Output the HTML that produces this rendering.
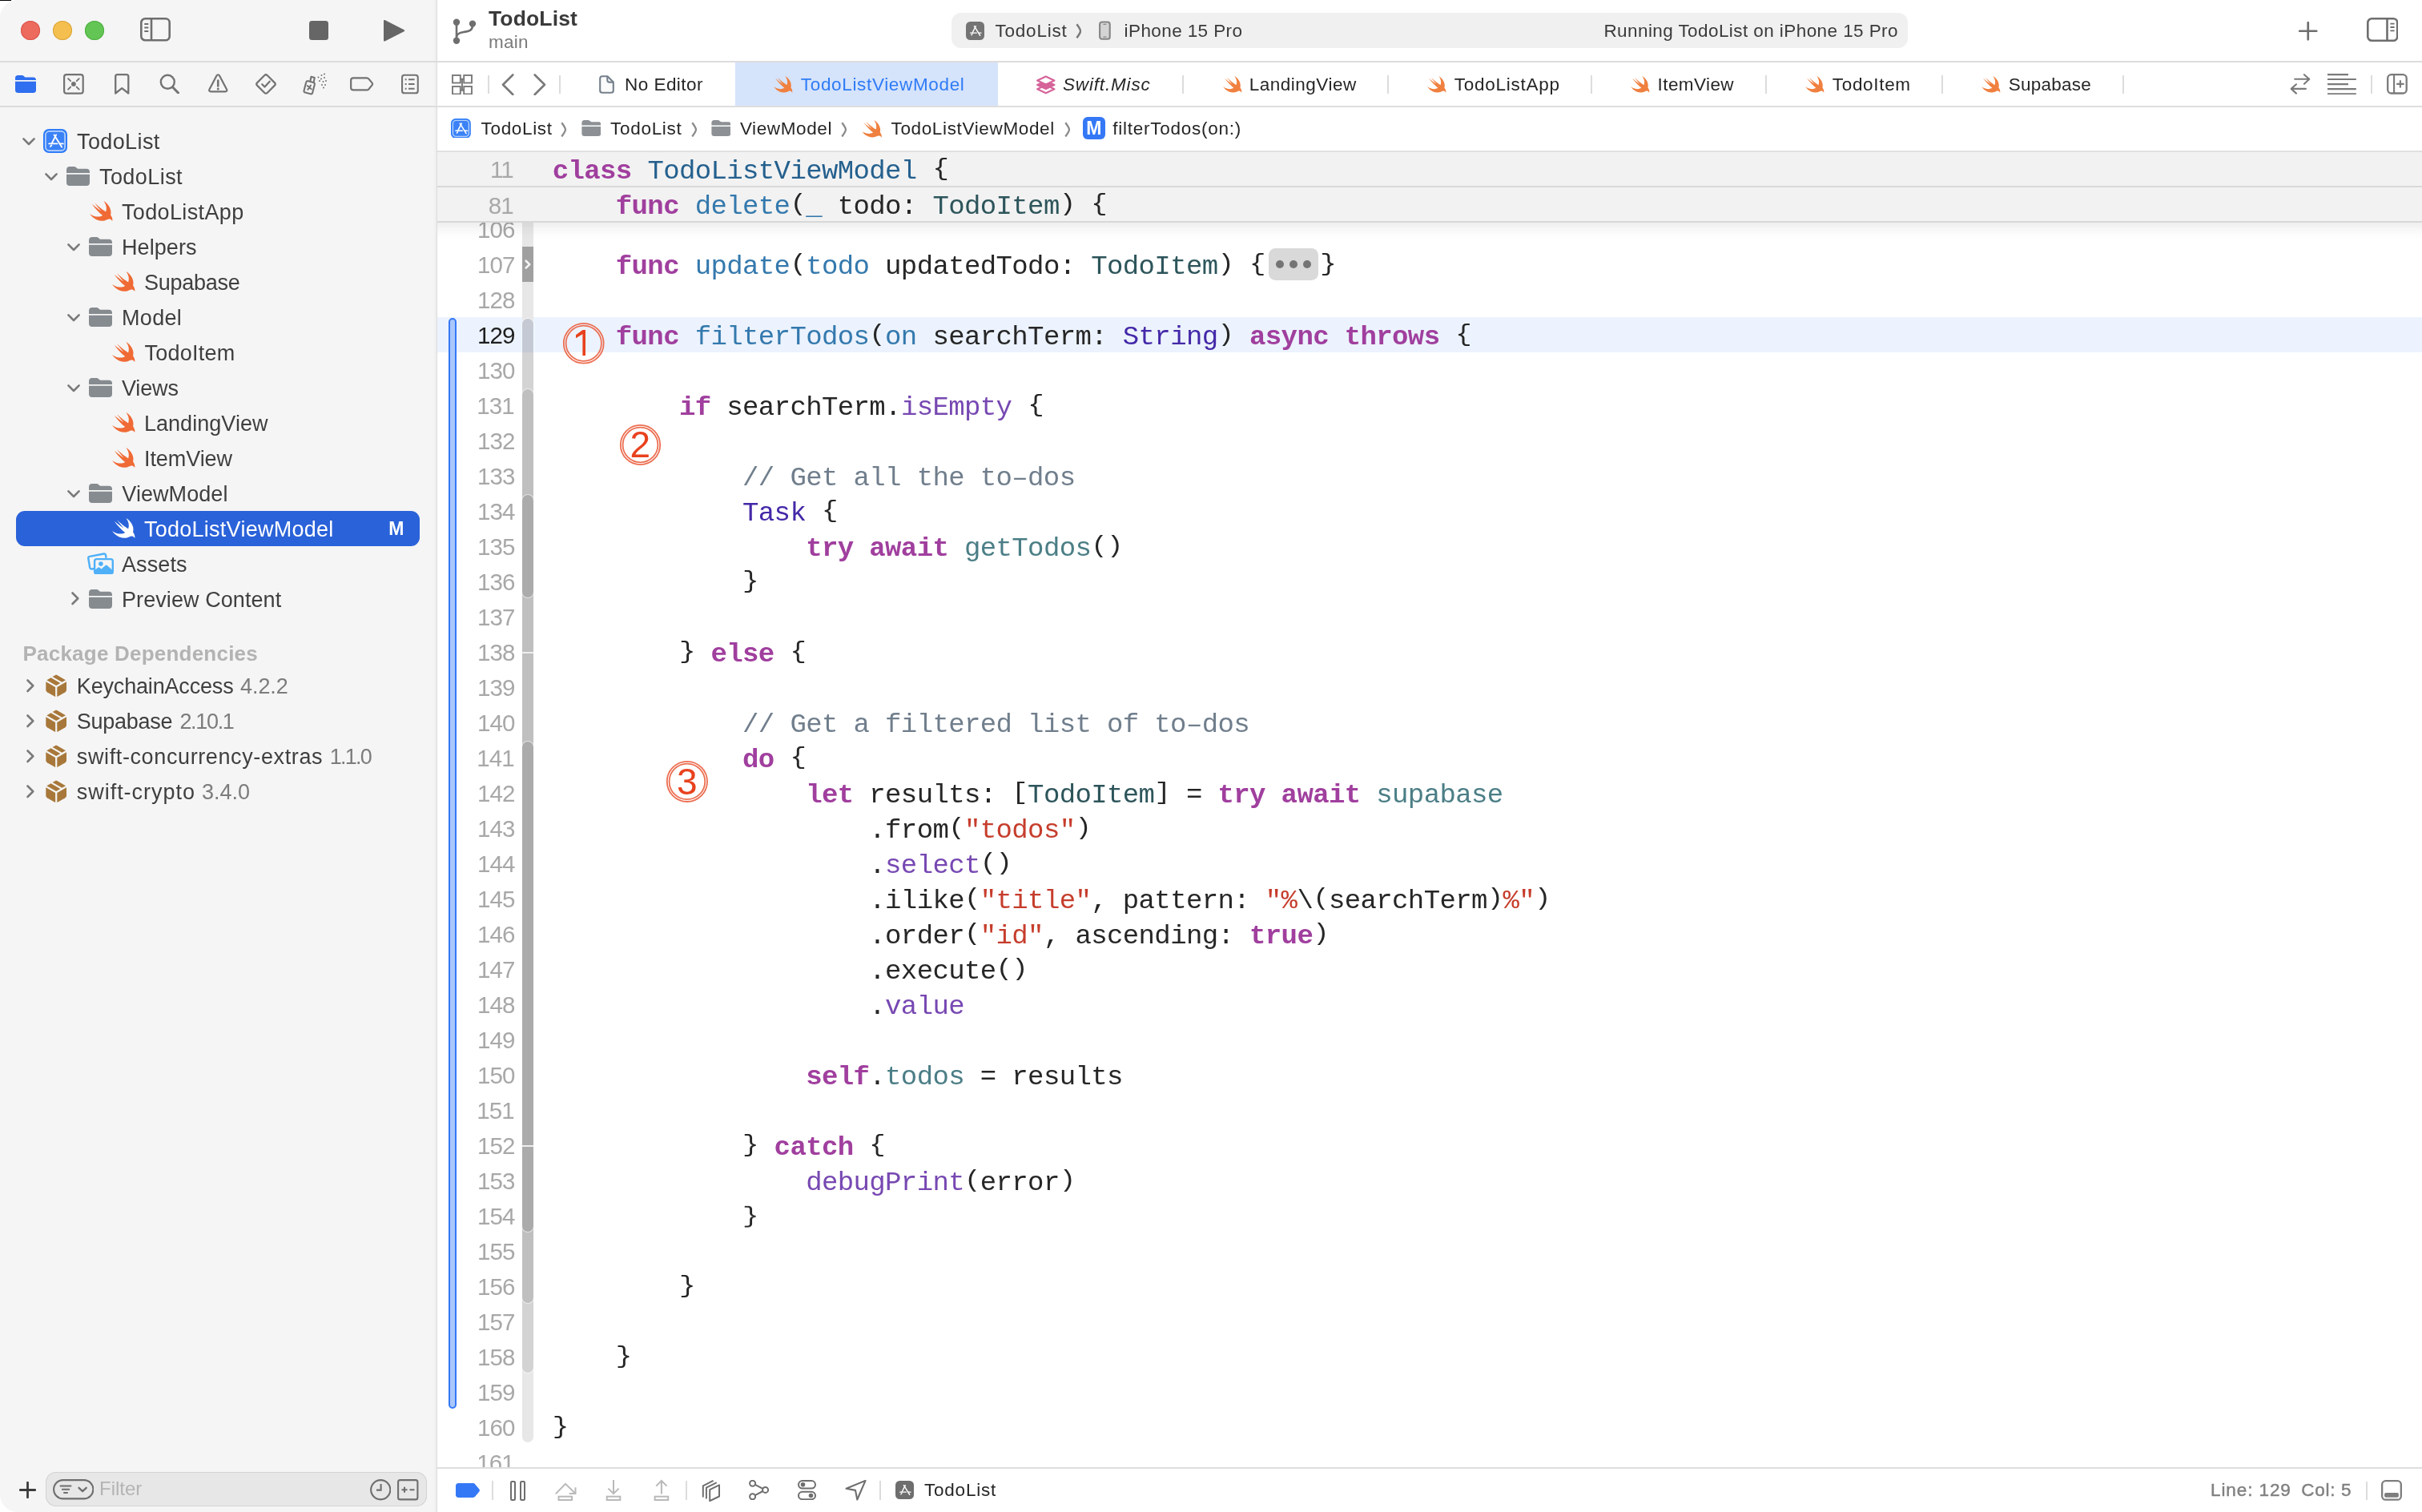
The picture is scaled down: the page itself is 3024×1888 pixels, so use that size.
<!DOCTYPE html>
<html><head><meta charset="utf-8"><title>Xcode - TodoList</title>
<style>html{font-size:calc(100vw / 30.24);}html,body{margin:0;padding:0;}body{width:30.24rem;height:18.88rem;position:relative;overflow:hidden;background:#ffffff;font-family:'Liberation Sans', sans-serif;}.c{position:absolute;white-space:pre;font-family:'Liberation Mono', monospace;}.b{display:inline-block;transform:translateY(-0.023rem) scaleY(0.86);}.k{color:#a03f9e;font-weight:bold}.td{color:#24608e}.fd{color:#3479ad}.pt{color:#2d555b}.st{color:#4428a8}.pf{color:#4b7e86}.sf{color:#7748b2}.s{color:#c63d2c}.cm{color:#707e8c}</style></head><body><div id="w" style="position:absolute;left:0;top:0;width:30.24rem;height:18.88rem;overflow:hidden;will-change:transform;transform:translateZ(0);">
<div style="position:absolute;left:0rem;top:0rem;width:5.45rem;height:18.88rem;background:#f5f5f5;"></div>
<div style="position:absolute;left:5.45rem;top:0rem;width:0.01rem;height:18.88rem;background:#dddddd;"></div>
<div style="position:absolute;left:5.41rem;top:0rem;width:0.04rem;height:18.88rem;background:linear-gradient(to right,rgba(0,0,0,0),rgba(0,0,0,0.035));"></div>
<div style="position:absolute;left:0rem;top:0.76rem;width:30.24rem;height:0.02rem;background:#dcdcdc;"></div>
<div style="position:absolute;left:0rem;top:1.32rem;width:5.45rem;height:0.02rem;background:#dcdcdc;"></div>
<div style="position:absolute;left:5.46rem;top:1.32rem;width:24.78rem;height:0.02rem;background:#dedede;"></div>
<div style="position:absolute;left:5.46rem;top:1.88rem;width:24.78rem;height:0.02rem;background:#e0e0e0;"></div>
<svg style="position:absolute;left:0rem;top:0rem;" width="0.22rem" height="0.22rem" viewBox="0 0 22 22"><path d="M0 0h22C9.800 0 0 9.800 0 22z" fill="#ffffff"/></svg>
<svg style="position:absolute;left:0rem;top:18.66rem;" width="0.22rem" height="0.22rem" viewBox="0 0 22 22"><path d="M0 22h22C9.800 22 0 12.200 0 0z" fill="#ffffff"/></svg>
<div style="position:absolute;left:0rem;top:0rem;width:0.14rem;height:0.01rem;background:#000000;"></div>
<div style="position:absolute;left:0.26rem;top:0.26rem;width:0.24rem;height:0.24rem;border-radius:50%;background:#ed6a5e;box-shadow:inset 0 0 0 0.01rem #d9554a;"></div>
<div style="position:absolute;left:0.66rem;top:0.26rem;width:0.24rem;height:0.24rem;border-radius:50%;background:#f5bf4f;box-shadow:inset 0 0 0 0.01rem #d9a43a;"></div>
<div style="position:absolute;left:1.06rem;top:0.26rem;width:0.24rem;height:0.24rem;border-radius:50%;background:#62c554;box-shadow:inset 0 0 0 0.01rem #4fae42;"></div>
<svg style="position:absolute;left:1.75rem;top:0.22rem;" width="0.38rem" height="0.295rem" viewBox="0 0 38 29.5"><rect x="1.3" y="1.3" width="35.4" height="26.9" rx="5" fill="none" stroke="#6e6e6e" stroke-width="2.6"/><path d="M14 1.500v26.500" stroke="#6e6e6e" stroke-width="2.600"/><path d="M5.300 8h5M5.300 12.500h5M5.300 17h5" stroke="#6e6e6e" stroke-width="1.800"/></svg>
<div style="position:absolute;left:3.86rem;top:0.26rem;width:0.24rem;height:0.24rem;background:#666666;border-radius:0.035rem;"></div>
<svg style="position:absolute;left:4.79rem;top:0.235rem;" width="0.27rem" height="0.285rem" viewBox="0 0 27 28.500"><path d="M2 1.200C.9.600 0 1.100 0 2.300v23.900c0 1.200.9 1.700 2 1.100L25.500 15.300c1-.6 1-1.500 0-2.100z" fill="#666"/></svg>
<svg style="position:absolute;left:0.19rem;top:0.939rem;" width="0.26rem" height="0.22rem" viewBox="0 0 26 22"><path fill="#2f6ff0" d="M0 3.600C0 1.300 1.200 0 3.500 0h4.600c1.100 0 1.800.300 2.600 1l1 .900c.500.400.900.600 1.700.600h9.100C24.800 2.500 26 3.700 26 6H0z"/><path fill="#2f6ff0" d="M0 7.800h26v10.700c0 2.300-1.200 3.500-3.500 3.500h-19C1.200 22 0 20.800 0 18.500z"/></svg>
<svg style="position:absolute;left:0.792rem;top:0.919rem;" width="0.258rem" height="0.258rem" viewBox="0 0 25.800 25.800"><rect x="1.100" y="1.100" width="23.600" height="23.600" rx="3" fill="none" stroke="#737373" stroke-width="2.200"/><path d="M6.100 6.200l3 3M19.700 6.200l-3 3M6.100 19.600l3-3M19.700 19.600l-3-3" stroke="#737373" stroke-width="1.900" stroke-linecap="round"/><circle cx="12.900" cy="12.900" r="2.900" fill="#737373"/></svg>
<svg style="position:absolute;left:1.43rem;top:0.919rem;" width="0.185rem" height="0.262rem" viewBox="0 0 18.500 26.200"><path d="M1.200 3.600c0-1.500.900-2.400 2.400-2.400h11.300c1.500 0 2.400.900 2.400 2.400v20.900L9.250 18.200 1.200 24.500z" fill="none" stroke="#737373" stroke-width="2.300" stroke-linejoin="round"/></svg>
<svg style="position:absolute;left:1.987rem;top:0.917rem;" width="0.25rem" height="0.255rem" viewBox="0 0 25 25.500"><circle cx="10.300" cy="10.300" r="8.500" fill="none" stroke="#737373" stroke-width="2.400"/><path d="M16.800 17l6.700 7" stroke="#737373" stroke-width="3" stroke-linecap="round"/></svg>
<svg style="position:absolute;left:2.6rem;top:0.918rem;" width="0.245rem" height="0.25rem" viewBox="0 0 24.500 25"><path d="M10.600 2.300c.800-1.400 2.500-1.400 3.300 0l9.100 17.300c.800 1.400 0 2.800-1.600 2.800H3.100c-1.600 0-2.400-1.400-1.600-2.800z" fill="none" stroke="#737373" stroke-width="2.200" stroke-linejoin="round"/><path d="M12.250 8.600v6.800" stroke="#737373" stroke-width="2.600" stroke-linecap="round"/><circle cx="12.250" cy="19" r="1.500" fill="#737373"/></svg>
<svg style="position:absolute;left:3.19rem;top:0.919rem;" width="0.26rem" height="0.26rem" viewBox="0 0 27 27"><path d="M11.800 2.100c1-1 2.400-1 3.400 0l9.700 9.700c1 1 1 2.400 0 3.400l-9.700 9.700c-1 1-2.400 1-3.400 0L2.100 15.200c-1-1-1-2.400 0-3.400z" fill="none" stroke="#737373" stroke-width="2.300"/><path d="M8.600 13.800l3.300 3.300 6.500-7" fill="none" stroke="#737373" stroke-width="2.400" stroke-linecap="round" stroke-linejoin="round"/></svg>
<svg style="position:absolute;left:3.775rem;top:0.91rem;" width="0.31rem" height="0.28rem" viewBox="0 0 31 28"><g fill="none" stroke="#737373" stroke-width="2.100" stroke-linejoin="round"><path d="M4.200 11.800c.3-1.300 1.300-1.900 2.600-1.600l6.400 1.700c1.300.3 1.900 1.300 1.600 2.600l-2.600 10.200c-.3 1.300-1.300 1.900-2.600 1.600l-6.400-1.700c-1.300-.3-1.900-1.300-1.600-2.600z"/><path d="M9.300 10.800l1.200-6 4.300 1.100-1.200 6"/><path d="M5.700 16l5 4.300M10 15.600l-3.700 5.300" stroke-width="1.900" stroke-linecap="round"/></g><g fill="#737373"><circle cx="19.500" cy="5.500" r="1"/><circle cx="23.500" cy="3" r="1"/><circle cx="27" cy="1.500" r="1"/><circle cx="23" cy="7.500" r="1"/><circle cx="27" cy="6" r="1"/><circle cx="21" cy="10" r="1"/><circle cx="25.500" cy="11" r="1"/><circle cx="29" cy="10" r="1"/><circle cx="24" cy="15" r="1"/><circle cx="28" cy="15" r="1"/><circle cx="26" cy="18.500" r="1"/></g></svg>
<svg style="position:absolute;left:4.37rem;top:0.961rem;" width="0.295rem" height="0.178rem" viewBox="0 0 30.500 18"><path d="M1.200 4.200c0-2 1-3 3-3h17.300c1.300 0 2 .3 2.800 1.300l4.300 5.200c.6.800.6 1.800 0 2.600l-4.300 5.200c-.8 1-1.500 1.300-2.800 1.300H4.200c-2 0-3-1-3-3z" fill="none" stroke="#737373" stroke-width="2.300"/></svg>
<svg style="position:absolute;left:5.01rem;top:0.919rem;" width="0.218rem" height="0.259rem" viewBox="0 0 23 26"><rect x="1.100" y="1.100" width="20.800" height="23.800" rx="3" fill="none" stroke="#737373" stroke-width="2.200"/><path d="M9.500 7h8M9.500 13h8M9.500 19h8" stroke="#737373" stroke-width="2.100"/><path d="M5 7h2M5 13h2M5 19h2" stroke="#737373" stroke-width="2.100"/></svg>
<svg style="position:absolute;left:0.28rem;top:1.715rem;overflow:visible;" width="0.16rem" height="0.095rem" viewBox="0 0 16 9.5"><path d="M1.4 1.4L8 8l6.6-6.6" fill="none" stroke="#7a7a7a" stroke-width="2.6" stroke-linecap="round" stroke-linejoin="round"/></svg>
<svg style="position:absolute;left:0.54rem;top:1.609rem;" width="0.3rem" height="0.3rem" viewBox="0 0 30 30"><rect x="0" y="0" width="30" height="30" rx="7" fill="#2f7cf8"/><rect x="2.900" y="2.900" width="24.200" height="24.200" rx="4.600" fill="#3b82f7" stroke="#b5d2fb" stroke-width="1.700"/><g stroke="#fff" stroke-width="1.850" stroke-linecap="round" fill="none" transform="translate(0.800,0.200)"><path d="M15.300 7.200L9.900 17.800"/><path d="M12.800 7.200l9.500 15.200"/><path d="M6.400 18.200h10.200"/><path d="M19.700 18.200h4.300"/><path d="M8.200 21.700l1.300-1.500"/></g></svg>
<div style="position:absolute;left:0.96rem;top:1.5604rem;height:0.43rem;line-height:0.43rem;font-family:'Liberation Sans', sans-serif;font-size:0.27rem;color:#3f3f3f;white-space:pre;letter-spacing:0.00392rem;">TodoList</div>
<svg style="position:absolute;left:0.56rem;top:2.155rem;overflow:visible;" width="0.16rem" height="0.095rem" viewBox="0 0 16 9.5"><path d="M1.4 1.4L8 8l6.6-6.6" fill="none" stroke="#7a7a7a" stroke-width="2.6" stroke-linecap="round" stroke-linejoin="round"/></svg>
<svg style="position:absolute;left:0.83rem;top:2.08rem;" width="0.29rem" height="0.24rem" viewBox="0 0 29 24"><path fill="#868b90" d="M0 4.2C0 1.6 1.4 0 4 0h5.2c1.3 0 2 .3 3 1.2l1.2 1c.5.4.9.6 1.8.6H25c2.6 0 4 1.4 4 3.9V7.900H0z"/><path fill="#868b90" d="M0 9.700h29v10.400c0 2.5-1.4 3.9-4 3.9H4c-2.6 0-4-1.4-4-3.9z"/></svg>
<div style="position:absolute;left:1.24rem;top:2.0004rem;height:0.43rem;line-height:0.43rem;font-family:'Liberation Sans', sans-serif;font-size:0.27rem;color:#3f3f3f;white-space:pre;letter-spacing:0.00429rem;">TodoList</div>
<svg style="position:absolute;left:1.115rem;top:2.51rem;overflow:visible;" preserveAspectRatio="none" width="0.286rem" height="0.254rem" viewBox="2.35 3.35 18.3 16.6"><path fill="#f06a35" d="M13.543 3.41c4.114 2.47 6.545 7.162 5.549 11.131-.024.093-.05.181-.076.272l.002.001c2.062 2.538 1.5 5.258 1.236 4.745-1.072-2.086-3.066-1.568-4.088-1.043a6.803 6.803 0 0 1-.281.158l-.02.012-.002.002c-2.115 1.123-4.957 1.205-7.812-.022a12.568 12.568 0 0 1-5.64-4.838c.649.48 1.35.902 2.097 1.252 3.019 1.414 6.051 1.311 8.197-.002C9.651 12.73 7.101 9.67 5.146 7.191a10.628 10.628 0 0 1-1.005-1.384c2.34 2.142 6.038 4.83 7.365 5.576C8.69 8.408 6.208 4.743 6.324 4.86c4.436 4.47 8.528 6.996 8.528 6.996.154.085.27.154.36.213.085-.215.16-.437.224-.668.708-2.588-.09-5.548-1.893-7.992z"/></svg>
<div style="position:absolute;left:1.52rem;top:2.4404rem;height:0.43rem;line-height:0.43rem;font-family:'Liberation Sans', sans-serif;font-size:0.27rem;color:#3f3f3f;white-space:pre;letter-spacing:0.00354rem;">TodoListApp</div>
<svg style="position:absolute;left:0.84rem;top:3.035rem;overflow:visible;" width="0.16rem" height="0.095rem" viewBox="0 0 16 9.5"><path d="M1.4 1.4L8 8l6.6-6.6" fill="none" stroke="#7a7a7a" stroke-width="2.6" stroke-linecap="round" stroke-linejoin="round"/></svg>
<svg style="position:absolute;left:1.11rem;top:2.96rem;" width="0.29rem" height="0.24rem" viewBox="0 0 29 24"><path fill="#868b90" d="M0 4.2C0 1.6 1.4 0 4 0h5.2c1.3 0 2 .3 3 1.2l1.2 1c.5.4.9.6 1.8.6H25c2.6 0 4 1.4 4 3.9V7.900H0z"/><path fill="#868b90" d="M0 9.700h29v10.400c0 2.5-1.4 3.9-4 3.9H4c-2.6 0-4-1.4-4-3.9z"/></svg>
<div style="position:absolute;left:1.52rem;top:2.8804rem;height:0.43rem;line-height:0.43rem;font-family:'Liberation Sans', sans-serif;font-size:0.27rem;color:#3f3f3f;white-space:pre;letter-spacing:0.0008rem;">Helpers</div>
<svg style="position:absolute;left:1.395rem;top:3.39rem;overflow:visible;" preserveAspectRatio="none" width="0.286rem" height="0.254rem" viewBox="2.35 3.35 18.3 16.6"><path fill="#f06a35" d="M13.543 3.41c4.114 2.47 6.545 7.162 5.549 11.131-.024.093-.05.181-.076.272l.002.001c2.062 2.538 1.5 5.258 1.236 4.745-1.072-2.086-3.066-1.568-4.088-1.043a6.803 6.803 0 0 1-.281.158l-.02.012-.002.002c-2.115 1.123-4.957 1.205-7.812-.022a12.568 12.568 0 0 1-5.64-4.838c.649.48 1.35.902 2.097 1.252 3.019 1.414 6.051 1.311 8.197-.002C9.651 12.73 7.101 9.67 5.146 7.191a10.628 10.628 0 0 1-1.005-1.384c2.34 2.142 6.038 4.83 7.365 5.576C8.69 8.408 6.208 4.743 6.324 4.86c4.436 4.47 8.528 6.996 8.528 6.996.154.085.27.154.36.213.085-.215.16-.437.224-.668.708-2.588-.09-5.548-1.893-7.992z"/></svg>
<div style="position:absolute;left:1.799rem;top:3.3204rem;height:0.43rem;line-height:0.43rem;font-family:'Liberation Sans', sans-serif;font-size:0.27rem;color:#3f3f3f;white-space:pre;letter-spacing:-0.00238rem;">Supabase</div>
<svg style="position:absolute;left:0.84rem;top:3.915rem;overflow:visible;" width="0.16rem" height="0.095rem" viewBox="0 0 16 9.5"><path d="M1.4 1.4L8 8l6.6-6.6" fill="none" stroke="#7a7a7a" stroke-width="2.6" stroke-linecap="round" stroke-linejoin="round"/></svg>
<svg style="position:absolute;left:1.11rem;top:3.84rem;" width="0.29rem" height="0.24rem" viewBox="0 0 29 24"><path fill="#868b90" d="M0 4.2C0 1.6 1.4 0 4 0h5.2c1.3 0 2 .3 3 1.2l1.2 1c.5.4.9.6 1.8.6H25c2.6 0 4 1.4 4 3.9V7.900H0z"/><path fill="#868b90" d="M0 9.700h29v10.400c0 2.5-1.4 3.9-4 3.9H4c-2.6 0-4-1.4-4-3.9z"/></svg>
<div style="position:absolute;left:1.52rem;top:3.7604rem;height:0.43rem;line-height:0.43rem;font-family:'Liberation Sans', sans-serif;font-size:0.27rem;color:#3f3f3f;white-space:pre;letter-spacing:0.00312rem;">Model</div>
<svg style="position:absolute;left:1.395rem;top:4.27rem;overflow:visible;" preserveAspectRatio="none" width="0.286rem" height="0.254rem" viewBox="2.35 3.35 18.3 16.6"><path fill="#f06a35" d="M13.543 3.41c4.114 2.47 6.545 7.162 5.549 11.131-.024.093-.05.181-.076.272l.002.001c2.062 2.538 1.5 5.258 1.236 4.745-1.072-2.086-3.066-1.568-4.088-1.043a6.803 6.803 0 0 1-.281.158l-.02.012-.002.002c-2.115 1.123-4.957 1.205-7.812-.022a12.568 12.568 0 0 1-5.64-4.838c.649.48 1.35.902 2.097 1.252 3.019 1.414 6.051 1.311 8.197-.002C9.651 12.73 7.101 9.67 5.146 7.191a10.628 10.628 0 0 1-1.005-1.384c2.34 2.142 6.038 4.83 7.365 5.576C8.69 8.408 6.208 4.743 6.324 4.86c4.436 4.47 8.528 6.996 8.528 6.996.154.085.27.154.36.213.085-.215.16-.437.224-.668.708-2.588-.09-5.548-1.893-7.992z"/></svg>
<div style="position:absolute;left:1.805rem;top:4.2004rem;height:0.43rem;line-height:0.43rem;font-family:'Liberation Sans', sans-serif;font-size:0.27rem;color:#3f3f3f;white-space:pre;letter-spacing:0.0023rem;">TodoItem</div>
<svg style="position:absolute;left:0.84rem;top:4.795rem;overflow:visible;" width="0.16rem" height="0.095rem" viewBox="0 0 16 9.5"><path d="M1.4 1.4L8 8l6.6-6.6" fill="none" stroke="#7a7a7a" stroke-width="2.6" stroke-linecap="round" stroke-linejoin="round"/></svg>
<svg style="position:absolute;left:1.11rem;top:4.72rem;" width="0.29rem" height="0.24rem" viewBox="0 0 29 24"><path fill="#868b90" d="M0 4.2C0 1.6 1.4 0 4 0h5.2c1.3 0 2 .3 3 1.2l1.2 1c.5.4.9.6 1.8.6H25c2.6 0 4 1.4 4 3.9V7.900H0z"/><path fill="#868b90" d="M0 9.700h29v10.400c0 2.5-1.4 3.9-4 3.9H4c-2.6 0-4-1.4-4-3.9z"/></svg>
<div style="position:absolute;left:1.52rem;top:4.6404rem;height:0.43rem;line-height:0.43rem;font-family:'Liberation Sans', sans-serif;font-size:0.27rem;color:#3f3f3f;white-space:pre;letter-spacing:-0.00147rem;">Views</div>
<svg style="position:absolute;left:1.395rem;top:5.15rem;overflow:visible;" preserveAspectRatio="none" width="0.286rem" height="0.254rem" viewBox="2.35 3.35 18.3 16.6"><path fill="#f06a35" d="M13.543 3.41c4.114 2.47 6.545 7.162 5.549 11.131-.024.093-.05.181-.076.272l.002.001c2.062 2.538 1.5 5.258 1.236 4.745-1.072-2.086-3.066-1.568-4.088-1.043a6.803 6.803 0 0 1-.281.158l-.02.012-.002.002c-2.115 1.123-4.957 1.205-7.812-.022a12.568 12.568 0 0 1-5.64-4.838c.649.48 1.35.902 2.097 1.252 3.019 1.414 6.051 1.311 8.197-.002C9.651 12.73 7.101 9.67 5.146 7.191a10.628 10.628 0 0 1-1.005-1.384c2.34 2.142 6.038 4.83 7.365 5.576C8.69 8.408 6.208 4.743 6.324 4.86c4.436 4.47 8.528 6.996 8.528 6.996.154.085.27.154.36.213.085-.215.16-.437.224-.668.708-2.588-.09-5.548-1.893-7.992z"/></svg>
<div style="position:absolute;left:1.799rem;top:5.0804rem;height:0.43rem;line-height:0.43rem;font-family:'Liberation Sans', sans-serif;font-size:0.27rem;color:#3f3f3f;white-space:pre;letter-spacing:0.00052rem;">LandingView</div>
<svg style="position:absolute;left:1.395rem;top:5.59rem;overflow:visible;" preserveAspectRatio="none" width="0.286rem" height="0.254rem" viewBox="2.35 3.35 18.3 16.6"><path fill="#f06a35" d="M13.543 3.41c4.114 2.47 6.545 7.162 5.549 11.131-.024.093-.05.181-.076.272l.002.001c2.062 2.538 1.5 5.258 1.236 4.745-1.072-2.086-3.066-1.568-4.088-1.043a6.803 6.803 0 0 1-.281.158l-.02.012-.002.002c-2.115 1.123-4.957 1.205-7.812-.022a12.568 12.568 0 0 1-5.64-4.838c.649.48 1.35.902 2.097 1.252 3.019 1.414 6.051 1.311 8.197-.002C9.651 12.73 7.101 9.67 5.146 7.191a10.628 10.628 0 0 1-1.005-1.384c2.34 2.142 6.038 4.83 7.365 5.576C8.69 8.408 6.208 4.743 6.324 4.86c4.436 4.47 8.528 6.996 8.528 6.996.154.085.27.154.36.213.085-.215.16-.437.224-.668.708-2.588-.09-5.548-1.893-7.992z"/></svg>
<div style="position:absolute;left:1.8rem;top:5.5204rem;height:0.43rem;line-height:0.43rem;font-family:'Liberation Sans', sans-serif;font-size:0.27rem;color:#3f3f3f;white-space:pre;letter-spacing:-0.00081rem;">ItemView</div>
<svg style="position:absolute;left:0.84rem;top:6.115rem;overflow:visible;" width="0.16rem" height="0.095rem" viewBox="0 0 16 9.5"><path d="M1.4 1.4L8 8l6.6-6.6" fill="none" stroke="#7a7a7a" stroke-width="2.6" stroke-linecap="round" stroke-linejoin="round"/></svg>
<svg style="position:absolute;left:1.11rem;top:6.04rem;" width="0.29rem" height="0.24rem" viewBox="0 0 29 24"><path fill="#868b90" d="M0 4.2C0 1.6 1.4 0 4 0h5.2c1.3 0 2 .3 3 1.2l1.2 1c.5.4.9.6 1.8.6H25c2.6 0 4 1.4 4 3.9V7.900H0z"/><path fill="#868b90" d="M0 9.700h29v10.400c0 2.5-1.4 3.9-4 3.9H4c-2.6 0-4-1.4-4-3.9z"/></svg>
<div style="position:absolute;left:1.523rem;top:5.9604rem;height:0.43rem;line-height:0.43rem;font-family:'Liberation Sans', sans-serif;font-size:0.27rem;color:#3f3f3f;white-space:pre;letter-spacing:0.0007rem;">ViewModel</div>
<div style="position:absolute;left:0.2rem;top:6.38rem;width:5.04rem;height:0.44rem;background:#2a62d9;border-radius:0.11rem;"></div>
<svg style="position:absolute;left:1.395rem;top:6.47rem;overflow:visible;" preserveAspectRatio="none" width="0.286rem" height="0.254rem" viewBox="2.35 3.35 18.3 16.6"><path fill="#ffffff" d="M13.543 3.41c4.114 2.47 6.545 7.162 5.549 11.131-.024.093-.05.181-.076.272l.002.001c2.062 2.538 1.5 5.258 1.236 4.745-1.072-2.086-3.066-1.568-4.088-1.043a6.803 6.803 0 0 1-.281.158l-.02.012-.002.002c-2.115 1.123-4.957 1.205-7.812-.022a12.568 12.568 0 0 1-5.64-4.838c.649.48 1.35.902 2.097 1.252 3.019 1.414 6.051 1.311 8.197-.002C9.651 12.73 7.101 9.67 5.146 7.191a10.628 10.628 0 0 1-1.005-1.384c2.34 2.142 6.038 4.83 7.365 5.576C8.69 8.408 6.208 4.743 6.324 4.86c4.436 4.47 8.528 6.996 8.528 6.996.154.085.27.154.36.213.085-.215.16-.437.224-.668.708-2.588-.09-5.548-1.893-7.992z"/></svg>
<div style="position:absolute;left:1.8rem;top:6.4004rem;height:0.43rem;line-height:0.43rem;font-family:'Liberation Sans', sans-serif;font-size:0.27rem;color:#ffffff;white-space:pre;letter-spacing:0.00257rem;">TodoListViewModel</div>
<div style="position:absolute;left:4.853rem;top:6.4183rem;height:0.37rem;line-height:0.37rem;font-family:'Liberation Sans', sans-serif;font-size:0.23rem;color:#ffffff;white-space:pre;font-weight:bold;">M</div>
<svg style="position:absolute;left:1.09rem;top:6.895rem;" width="0.332rem" height="0.278rem" viewBox="0 0 33.2 27.8"><g fill="none" stroke="#4fb0f8" stroke-width="2.4" stroke-linejoin="round"><path d="M9.2 19.9 5.6 20.5c-1.3.2-2.1-.4-2.4-1.7L1.3 7.3C1.1 6 1.7 5.1 3 4.9L20.600 1.5c1.3-.2 2.2.4 2.400 1.700l.6 3.6"/><rect x="9.1" y="8.1" width="22.7" height="18.300" rx="2.6"/></g><circle cx="16.9" cy="14.1" r="2.800" fill="#4fb0f8"/><path fill="#4fb0f8" d="M9.1 22.200l4-3.500c.8-.7 1.500-.7 2.300 0l2.100 1.900 4.900-4.400c.9-.8 1.700-.8 2.600 0l6.800 6.100v2c0 1.400-.8 2.100-2.200 2.100H11.300c-1.400 0-2.200-.7-2.200-2.100z"/></svg>
<div style="position:absolute;left:1.52rem;top:6.8404rem;height:0.43rem;line-height:0.43rem;font-family:'Liberation Sans', sans-serif;font-size:0.27rem;color:#3f3f3f;white-space:pre;letter-spacing:0.00112rem;">Assets</div>
<svg style="position:absolute;left:0.89rem;top:7.39rem;overflow:visible;" width="0.1rem" height="0.165rem" viewBox="0 0 10 16.5"><path d="M1.5 1.5l6.8 6.75L1.5 15" fill="none" stroke="#7a7a7a" stroke-width="2.6" stroke-linecap="round" stroke-linejoin="round"/></svg>
<svg style="position:absolute;left:1.11rem;top:7.36rem;" width="0.29rem" height="0.24rem" viewBox="0 0 29 24"><path fill="#868b90" d="M0 4.2C0 1.6 1.4 0 4 0h5.2c1.3 0 2 .3 3 1.2l1.2 1c.5.4.9.6 1.8.6H25c2.6 0 4 1.4 4 3.9V7.900H0z"/><path fill="#868b90" d="M0 9.700h29v10.400c0 2.5-1.4 3.9-4 3.9H4c-2.6 0-4-1.4-4-3.9z"/></svg>
<div style="position:absolute;left:1.52rem;top:7.2804rem;height:0.43rem;line-height:0.43rem;font-family:'Liberation Sans', sans-serif;font-size:0.27rem;color:#3f3f3f;white-space:pre;letter-spacing:0.0008rem;">Preview Content</div>
<div style="position:absolute;left:0.285rem;top:7.9479rem;height:0.42rem;line-height:0.42rem;font-family:'Liberation Sans', sans-serif;font-size:0.26rem;color:#b3b3b3;white-space:pre;font-weight:bold;letter-spacing:0.0022rem;">Package Dependencies</div>
<svg style="position:absolute;left:0.33rem;top:8.475rem;overflow:visible;" width="0.1rem" height="0.165rem" viewBox="0 0 10 16.5"><path d="M1.5 1.5l6.8 6.75L1.5 15" fill="none" stroke="#7a7a7a" stroke-width="2.6" stroke-linecap="round" stroke-linejoin="round"/></svg>
<svg style="position:absolute;left:0.568rem;top:8.418rem;" width="0.264rem" height="0.282rem" viewBox="0 0 26.4 28.2"><g fill="#a8783a"><path d="M8.6 3.1 11.7 1.3c1-.6 2-.6 3 0L25 7.2l-4.6 2.6z"/><path d="M1.3 7.3 6.6 4.2 18.4 11l-4.2 2.4c-.7.4-1.3.4-2 0z"/><path d="M.3 9.3l11.8 6.8v12L2.2 22.4C.9 21.6.3 20.7.3 19.2z"/><path d="M26.1 9.3 14.3 16.1v12l9.9-5.7c1.3-.8 1.9-1.7 1.9-3.2z"/></g></svg>
<div style="position:absolute;left:0.958rem;top:8.3584rem;height:0.43rem;line-height:0.43rem;font-family:'Liberation Sans', sans-serif;font-size:0.27rem;color:#3f3f3f;white-space:pre;letter-spacing:-0.00171rem;">KeychainAccess</div>
<div style="position:absolute;left:3rem;top:8.3584rem;height:0.43rem;line-height:0.43rem;font-family:'Liberation Sans', sans-serif;font-size:0.27rem;color:#7c7c7c;white-space:pre;letter-spacing:-0.0007rem;">4.2.2</div>
<svg style="position:absolute;left:0.33rem;top:8.915rem;overflow:visible;" width="0.1rem" height="0.165rem" viewBox="0 0 10 16.5"><path d="M1.5 1.5l6.8 6.75L1.5 15" fill="none" stroke="#7a7a7a" stroke-width="2.6" stroke-linecap="round" stroke-linejoin="round"/></svg>
<svg style="position:absolute;left:0.568rem;top:8.858rem;" width="0.264rem" height="0.282rem" viewBox="0 0 26.4 28.2"><g fill="#a8783a"><path d="M8.6 3.1 11.7 1.3c1-.6 2-.6 3 0L25 7.2l-4.6 2.6z"/><path d="M1.3 7.3 6.6 4.2 18.4 11l-4.2 2.4c-.7.4-1.3.4-2 0z"/><path d="M.3 9.3l11.8 6.8v12L2.2 22.4C.9 21.6.3 20.7.3 19.2z"/><path d="M26.1 9.3 14.3 16.1v12l9.9-5.7c1.3-.8 1.9-1.7 1.9-3.2z"/></g></svg>
<div style="position:absolute;left:0.958rem;top:8.7984rem;height:0.43rem;line-height:0.43rem;font-family:'Liberation Sans', sans-serif;font-size:0.27rem;color:#3f3f3f;white-space:pre;letter-spacing:-0.00263rem;">Supabase</div>
<div style="position:absolute;left:2.244rem;top:8.7984rem;height:0.43rem;line-height:0.43rem;font-family:'Liberation Sans', sans-serif;font-size:0.27rem;color:#7c7c7c;white-space:pre;letter-spacing:-0.01328rem;">2.10.1</div>
<svg style="position:absolute;left:0.33rem;top:9.355rem;overflow:visible;" width="0.1rem" height="0.165rem" viewBox="0 0 10 16.5"><path d="M1.5 1.5l6.8 6.75L1.5 15" fill="none" stroke="#7a7a7a" stroke-width="2.6" stroke-linecap="round" stroke-linejoin="round"/></svg>
<svg style="position:absolute;left:0.568rem;top:9.298rem;" width="0.264rem" height="0.282rem" viewBox="0 0 26.4 28.2"><g fill="#a8783a"><path d="M8.6 3.1 11.7 1.3c1-.6 2-.6 3 0L25 7.2l-4.6 2.6z"/><path d="M1.3 7.3 6.6 4.2 18.4 11l-4.2 2.4c-.7.4-1.3.4-2 0z"/><path d="M.3 9.3l11.8 6.8v12L2.2 22.4C.9 21.6.3 20.7.3 19.2z"/><path d="M26.1 9.3 14.3 16.1v12l9.9-5.7c1.3-.8 1.9-1.7 1.9-3.2z"/></g></svg>
<div style="position:absolute;left:0.958rem;top:9.2384rem;height:0.43rem;line-height:0.43rem;font-family:'Liberation Sans', sans-serif;font-size:0.27rem;color:#3f3f3f;white-space:pre;letter-spacing:0.00618rem;">swift-concurrency-extras</div>
<div style="position:absolute;left:4.117rem;top:9.2384rem;height:0.43rem;line-height:0.43rem;font-family:'Liberation Sans', sans-serif;font-size:0.27rem;color:#7c7c7c;white-space:pre;letter-spacing:-0.0177rem;">1.1.0</div>
<svg style="position:absolute;left:0.33rem;top:9.795rem;overflow:visible;" width="0.1rem" height="0.165rem" viewBox="0 0 10 16.5"><path d="M1.5 1.5l6.8 6.75L1.5 15" fill="none" stroke="#7a7a7a" stroke-width="2.6" stroke-linecap="round" stroke-linejoin="round"/></svg>
<svg style="position:absolute;left:0.568rem;top:9.738rem;" width="0.264rem" height="0.282rem" viewBox="0 0 26.4 28.2"><g fill="#a8783a"><path d="M8.6 3.1 11.7 1.3c1-.6 2-.6 3 0L25 7.2l-4.6 2.6z"/><path d="M1.3 7.3 6.6 4.2 18.4 11l-4.2 2.4c-.7.4-1.3.4-2 0z"/><path d="M.3 9.3l11.8 6.8v12L2.2 22.4C.9 21.6.3 20.7.3 19.2z"/><path d="M26.1 9.3 14.3 16.1v12l9.9-5.7c1.3-.8 1.9-1.7 1.9-3.2z"/></g></svg>
<div style="position:absolute;left:0.958rem;top:9.6784rem;height:0.43rem;line-height:0.43rem;font-family:'Liberation Sans', sans-serif;font-size:0.27rem;color:#3f3f3f;white-space:pre;letter-spacing:0.00965rem;">swift-crypto</div>
<div style="position:absolute;left:2.52rem;top:9.6784rem;height:0.43rem;line-height:0.43rem;font-family:'Liberation Sans', sans-serif;font-size:0.27rem;color:#7c7c7c;white-space:pre;letter-spacing:0.0001rem;">3.4.0</div>
<svg style="position:absolute;left:0.24rem;top:18.5rem;" width="0.21rem" height="0.21rem" viewBox="0 0 21 21"><path d="M10.500 1.200v18.600M1.200 10.500h18.600" stroke="#3c3c3c" stroke-width="2.800" stroke-linecap="round"/></svg>
<div style="position:absolute;left:0.565rem;top:18.38rem;width:4.765rem;height:0.43rem;background:#e7e7e7;border-radius:0.13rem;box-shadow:inset 0 0 0 0.01rem #d3d3d3;box-sizing:border-box;"></div>
<svg style="position:absolute;left:0.655rem;top:18.47rem;" width="0.515rem" height="0.255rem" viewBox="0 0 51.500 25.500"><rect x="1.100" y="1.100" width="49.300" height="23.300" rx="11.650" fill="none" stroke="#6e6e6e" stroke-width="2.100"/><path d="M9.500 8.500h13M11.800 12.750h8.400M14 17h4" stroke="#6e6e6e" stroke-width="2" stroke-linecap="round"/><path d="M32.500 10.800l4.600 4.400 4.600-4.400" fill="none" stroke="#6e6e6e" stroke-width="2.300" stroke-linecap="round" stroke-linejoin="round"/></svg>
<div style="position:absolute;left:1.24rem;top:18.4028rem;height:0.38rem;line-height:0.38rem;font-family:'Liberation Sans', sans-serif;font-size:0.24rem;color:#b4b4b4;white-space:pre;">Filter</div>
<svg style="position:absolute;left:4.615rem;top:18.47rem;" width="0.265rem" height="0.265rem" viewBox="0 0 26.500 26.500"><circle cx="13.250" cy="13.250" r="12.100" fill="none" stroke="#6e6e6e" stroke-width="2.100"/><path d="M13.600 6v7.600H8" fill="none" stroke="#6e6e6e" stroke-width="2.100"/></svg>
<svg style="position:absolute;left:4.96rem;top:18.47rem;" width="0.265rem" height="0.265rem" viewBox="0 0 26.500 26.500"><rect x="1.100" y="1.100" width="24.300" height="24.300" rx="2.500" fill="none" stroke="#6e6e6e" stroke-width="2.100"/><path d="M5.500 13.250h7M9 9.750v7M15.500 13.250h6" stroke="#6e6e6e" stroke-width="2.100"/></svg>
<svg style="position:absolute;left:5.65rem;top:0.225rem;" width="0.3rem" height="0.325rem" viewBox="0 0 30 32.500"><g fill="none" stroke="#6e6e6e" stroke-width="2.600"><path d="M5 7v18.500"/><path d="M25 8.500c0 7-5 7.500-11 8.500-5 .8-9 2-9 6"/></g><circle cx="5" cy="4.800" r="4.200" fill="#6e6e6e"/><circle cx="25" cy="6.600" r="4.200" fill="#6e6e6e"/><circle cx="5" cy="27.700" r="4.200" fill="#6e6e6e"/></svg>
<div style="position:absolute;left:6.1rem;top:0.0182rem;height:0.42rem;line-height:0.42rem;font-family:'Liberation Sans', sans-serif;font-size:0.265rem;color:#3a3a3a;white-space:pre;font-weight:bold;letter-spacing:0.00138rem;">TodoList</div>
<div style="position:absolute;left:6.1rem;top:0.345rem;height:0.36rem;line-height:0.36rem;font-family:'Liberation Sans', sans-serif;font-size:0.225rem;color:#7b7b7b;white-space:pre;letter-spacing:0.00258rem;">main</div>
<div style="position:absolute;left:11.88rem;top:0.16rem;width:11.94rem;height:0.44rem;background:#f0f0f0;border-radius:0.12rem;"></div>
<svg style="position:absolute;left:12.06rem;top:0.268rem;" width="0.23rem" height="0.23rem" viewBox="0 0 30 30"><rect x="0" y="0" width="30" height="30" rx="7" fill="#747474"/><g stroke="#fff" stroke-width="1.850" stroke-linecap="round" fill="none" transform="translate(0.800,0.200)"><path d="M15.300 7.200L9.900 17.800"/><path d="M12.800 7.200l9.500 15.200"/><path d="M6.400 18.200h10.200"/><path d="M19.700 18.200h4.300"/><path d="M8.200 21.700l1.300-1.500"/></g></svg>
<div style="position:absolute;left:12.426rem;top:0.209rem;height:0.36rem;line-height:0.36rem;font-family:'Liberation Sans', sans-serif;font-size:0.225rem;color:#3a3a3a;white-space:pre;letter-spacing:0.00749rem;">TodoList</div>
<svg style="position:absolute;left:13.426rem;top:0.286rem;" width="0.076rem" height="0.196rem" viewBox="0 0 7.600 19.600"><path d="M1.400 1.300c3.300 4.500 4.700 6.500 4.700 8.500s-1.400 4-4.700 8.500" fill="none" stroke="#7a7a7a" stroke-width="2.500"/></svg>
<svg style="position:absolute;left:13.723rem;top:0.262rem;" width="0.148rem" height="0.242rem" viewBox="0 0 14.800 23.500"><rect x="1.100" y="1.100" width="12.600" height="21.300" rx="2.800" fill="#d4d4d4" stroke="#858585" stroke-width="2.100"/><path d="M5.400 4h4M5.400 19.800h4" stroke="#8a8a8a" stroke-width="1.100"/></svg>
<div style="position:absolute;left:14.036rem;top:0.209rem;height:0.36rem;line-height:0.36rem;font-family:'Liberation Sans', sans-serif;font-size:0.225rem;color:#3a3a3a;white-space:pre;letter-spacing:0.004rem;">iPhone 15 Pro</div>
<div style="position:absolute;left:20.024rem;top:0.209rem;height:0.36rem;line-height:0.36rem;font-family:'Liberation Sans', sans-serif;font-size:0.225rem;color:#3a3a3a;white-space:pre;letter-spacing:0.00424rem;">Running TodoList on iPhone 15 Pro</div>
<svg style="position:absolute;left:28.7rem;top:0.27rem;" width="0.235rem" height="0.235rem" viewBox="0 0 23.500 23.500"><path d="M11.750 1.200v21.100M1.200 11.750h21.100" stroke="#6e6e6e" stroke-width="2.700" stroke-linecap="round"/></svg>
<svg style="position:absolute;left:29.545rem;top:0.22rem;" width="0.395rem" height="0.3rem" viewBox="0 0 39.500 30"><rect x="1.300" y="1.300" width="36.900" height="27.400" rx="5" fill="none" stroke="#6e6e6e" stroke-width="2.600"/><path d="M25.500 1.500v27" stroke="#6e6e6e" stroke-width="2.600"/><path d="M29.400 7.700h5.200M29.400 12h5.200M29.400 16.300h5.200" stroke="#6e6e6e" stroke-width="1.800"/></svg>
<svg style="position:absolute;left:5.64rem;top:0.925rem;" width="0.26rem" height="0.255rem" viewBox="0 0 26 25.500"><g fill="none" stroke="#7a7a7a" stroke-width="1.900"><rect x="1" y="1" width="9.800" height="9.500"/><rect x="15.200" y="1" width="9.800" height="9.500"/><rect x="1" y="15" width="9.800" height="9.500"/><rect x="15.200" y="15" width="9.800" height="9.500"/><path d="M10.800 5.750h4.400M13 10.500v4.500M10.800 19.750h4.400M13 5.750v14"/></g></svg>
<div style="position:absolute;left:6.085rem;top:0.94rem;width:0.02rem;height:0.225rem;background:#dcdcdc;"></div>
<svg style="position:absolute;left:6.26rem;top:0.915rem;" width="0.16rem" height="0.275rem" viewBox="0 0 16 27.500"><path d="M14.300 1.500L2 13.750 14.300 26" fill="none" stroke="#7a7a7a" stroke-width="2.600" stroke-linecap="round" stroke-linejoin="round"/></svg>
<svg style="position:absolute;left:6.66rem;top:0.915rem;" width="0.16rem" height="0.275rem" viewBox="0 0 16 27.500"><path d="M1.700 1.500L14 13.750 1.700 26" fill="none" stroke="#7a7a7a" stroke-width="2.600" stroke-linecap="round" stroke-linejoin="round"/></svg>
<div style="position:absolute;left:6.98rem;top:0.94rem;width:0.02rem;height:0.225rem;background:#dcdcdc;"></div>
<svg style="position:absolute;left:7.48rem;top:0.935rem;" width="0.19rem" height="0.23rem" viewBox="0 0 19 23"><path d="M1.200 4c0-1.800 1-2.800 2.800-2.800h6.500l7.300 7.300V19c0 1.800-1 2.800-2.800 2.800H4c-1.800 0-2.800-1-2.800-2.800z" fill="#fbfbfb" stroke="#76808c" stroke-width="2.100" stroke-linejoin="round"/><path d="M10.300 1.500V6c0 1.700.9 2.600 2.600 2.600h4.600" fill="none" stroke="#76808c" stroke-width="2.100"/></svg>
<div style="position:absolute;left:7.8rem;top:0.875rem;height:0.36rem;line-height:0.36rem;font-family:'Liberation Sans', sans-serif;font-size:0.225rem;color:#262626;white-space:pre;letter-spacing:0.00468rem;">No Editor</div>
<div style="position:absolute;left:9.18rem;top:0.78rem;width:3.28rem;height:0.54rem;background:#d5e3fb;"></div>
<svg style="position:absolute;left:9.66rem;top:0.945rem;overflow:visible;" preserveAspectRatio="none" width="0.235rem" height="0.21rem" viewBox="2.35 3.35 18.3 16.6"><path fill="#f0803f" d="M13.543 3.41c4.114 2.47 6.545 7.162 5.549 11.131-.024.093-.05.181-.076.272l.002.001c2.062 2.538 1.5 5.258 1.236 4.745-1.072-2.086-3.066-1.568-4.088-1.043a6.803 6.803 0 0 1-.281.158l-.02.012-.002.002c-2.115 1.123-4.957 1.205-7.812-.022a12.568 12.568 0 0 1-5.64-4.838c.649.48 1.35.902 2.097 1.252 3.019 1.414 6.051 1.311 8.197-.002C9.651 12.73 7.101 9.67 5.146 7.191a10.628 10.628 0 0 1-1.005-1.384c2.34 2.142 6.038 4.83 7.365 5.576C8.69 8.408 6.208 4.743 6.324 4.86c4.436 4.47 8.528 6.996 8.528 6.996.154.085.27.154.36.213.085-.215.16-.437.224-.668.708-2.588-.09-5.548-1.893-7.992z"/></svg>
<div style="position:absolute;left:9.998rem;top:0.875rem;height:0.36rem;line-height:0.36rem;font-family:'Liberation Sans', sans-serif;font-size:0.225rem;color:#2f7cf6;white-space:pre;letter-spacing:0.00662rem;">TodoListViewModel</div>
<svg style="position:absolute;left:12.94rem;top:0.925rem;" width="0.245rem" height="0.25rem" viewBox="0 0 24.500 25"><path d="M11.8 13.2 L22.4 18.2 L11.8 23.2 L1.200000000000001 18.2z" fill="#ffffff" stroke="#d6639a" stroke-width="2.200" stroke-linejoin="round"/><path d="M11.8 8.0 L22.4 13 L11.8 18.0 L1.200000000000001 13z" fill="#d6639a" stroke="#d6639a" stroke-width="2.200" stroke-linejoin="round"/><path d="M11.8 2.5999999999999996 L22.4 7.6 L11.8 12.6 L1.200000000000001 7.6z" fill="#ffffff" stroke="#d6639a" stroke-width="2.200" stroke-linejoin="round"/></svg>
<div style="position:absolute;left:13.27rem;top:0.875rem;height:0.36rem;line-height:0.36rem;font-family:'Liberation Sans', sans-serif;font-size:0.225rem;color:#262626;white-space:pre;letter-spacing:0.00835rem;font-style:italic;">Swift.Misc</div>
<svg style="position:absolute;left:15.265rem;top:0.945rem;overflow:visible;" preserveAspectRatio="none" width="0.235rem" height="0.21rem" viewBox="2.35 3.35 18.3 16.6"><path fill="#f0803f" d="M13.543 3.41c4.114 2.47 6.545 7.162 5.549 11.131-.024.093-.05.181-.076.272l.002.001c2.062 2.538 1.5 5.258 1.236 4.745-1.072-2.086-3.066-1.568-4.088-1.043a6.803 6.803 0 0 1-.281.158l-.02.012-.002.002c-2.115 1.123-4.957 1.205-7.812-.022a12.568 12.568 0 0 1-5.64-4.838c.649.48 1.35.902 2.097 1.252 3.019 1.414 6.051 1.311 8.197-.002C9.651 12.73 7.101 9.67 5.146 7.191a10.628 10.628 0 0 1-1.005-1.384c2.34 2.142 6.038 4.83 7.365 5.576C8.69 8.408 6.208 4.743 6.324 4.86c4.436 4.47 8.528 6.996 8.528 6.996.154.085.27.154.36.213.085-.215.16-.437.224-.668.708-2.588-.09-5.548-1.893-7.992z"/></svg>
<div style="position:absolute;left:15.597rem;top:0.875rem;height:0.36rem;line-height:0.36rem;font-family:'Liberation Sans', sans-serif;font-size:0.225rem;color:#262626;white-space:pre;letter-spacing:0.00514rem;">LandingView</div>
<svg style="position:absolute;left:17.815rem;top:0.945rem;overflow:visible;" preserveAspectRatio="none" width="0.235rem" height="0.21rem" viewBox="2.35 3.35 18.3 16.6"><path fill="#f0803f" d="M13.543 3.41c4.114 2.47 6.545 7.162 5.549 11.131-.024.093-.05.181-.076.272l.002.001c2.062 2.538 1.5 5.258 1.236 4.745-1.072-2.086-3.066-1.568-4.088-1.043a6.803 6.803 0 0 1-.281.158l-.02.012-.002.002c-2.115 1.123-4.957 1.205-7.812-.022a12.568 12.568 0 0 1-5.64-4.838c.649.48 1.35.902 2.097 1.252 3.019 1.414 6.051 1.311 8.197-.002C9.651 12.73 7.101 9.67 5.146 7.191a10.628 10.628 0 0 1-1.005-1.384c2.34 2.142 6.038 4.83 7.365 5.576C8.69 8.408 6.208 4.743 6.324 4.86c4.436 4.47 8.528 6.996 8.528 6.996.154.085.27.154.36.213.085-.215.16-.437.224-.668.708-2.588-.09-5.548-1.893-7.992z"/></svg>
<div style="position:absolute;left:18.157rem;top:0.875rem;height:0.36rem;line-height:0.36rem;font-family:'Liberation Sans', sans-serif;font-size:0.225rem;color:#262626;white-space:pre;letter-spacing:0.00742rem;">TodoListApp</div>
<svg style="position:absolute;left:20.36rem;top:0.945rem;overflow:visible;" preserveAspectRatio="none" width="0.235rem" height="0.21rem" viewBox="2.35 3.35 18.3 16.6"><path fill="#f0803f" d="M13.543 3.41c4.114 2.47 6.545 7.162 5.549 11.131-.024.093-.05.181-.076.272l.002.001c2.062 2.538 1.5 5.258 1.236 4.745-1.072-2.086-3.066-1.568-4.088-1.043a6.803 6.803 0 0 1-.281.158l-.02.012-.002.002c-2.115 1.123-4.957 1.205-7.812-.022a12.568 12.568 0 0 1-5.64-4.838c.649.48 1.35.902 2.097 1.252 3.019 1.414 6.051 1.311 8.197-.002C9.651 12.73 7.101 9.67 5.146 7.191a10.628 10.628 0 0 1-1.005-1.384c2.34 2.142 6.038 4.83 7.365 5.576C8.69 8.408 6.208 4.743 6.324 4.86c4.436 4.47 8.528 6.996 8.528 6.996.154.085.27.154.36.213.085-.215.16-.437.224-.668.708-2.588-.09-5.548-1.893-7.992z"/></svg>
<div style="position:absolute;left:20.696rem;top:0.875rem;height:0.36rem;line-height:0.36rem;font-family:'Liberation Sans', sans-serif;font-size:0.225rem;color:#262626;white-space:pre;letter-spacing:0.0041rem;">ItemView</div>
<svg style="position:absolute;left:22.535rem;top:0.945rem;overflow:visible;" preserveAspectRatio="none" width="0.235rem" height="0.21rem" viewBox="2.35 3.35 18.3 16.6"><path fill="#f0803f" d="M13.543 3.41c4.114 2.47 6.545 7.162 5.549 11.131-.024.093-.05.181-.076.272l.002.001c2.062 2.538 1.5 5.258 1.236 4.745-1.072-2.086-3.066-1.568-4.088-1.043a6.803 6.803 0 0 1-.281.158l-.02.012-.002.002c-2.115 1.123-4.957 1.205-7.812-.022a12.568 12.568 0 0 1-5.64-4.838c.649.48 1.35.902 2.097 1.252 3.019 1.414 6.051 1.311 8.197-.002C9.651 12.73 7.101 9.67 5.146 7.191a10.628 10.628 0 0 1-1.005-1.384c2.34 2.142 6.038 4.83 7.365 5.576C8.69 8.408 6.208 4.743 6.324 4.86c4.436 4.47 8.528 6.996 8.528 6.996.154.085.27.154.36.213.085-.215.16-.437.224-.668.708-2.588-.09-5.548-1.893-7.992z"/></svg>
<div style="position:absolute;left:22.878rem;top:0.875rem;height:0.36rem;line-height:0.36rem;font-family:'Liberation Sans', sans-serif;font-size:0.225rem;color:#262626;white-space:pre;letter-spacing:0.00681rem;">TodoItem</div>
<svg style="position:absolute;left:24.735rem;top:0.945rem;overflow:visible;" preserveAspectRatio="none" width="0.235rem" height="0.21rem" viewBox="2.35 3.35 18.3 16.6"><path fill="#f0803f" d="M13.543 3.41c4.114 2.47 6.545 7.162 5.549 11.131-.024.093-.05.181-.076.272l.002.001c2.062 2.538 1.5 5.258 1.236 4.745-1.072-2.086-3.066-1.568-4.088-1.043a6.803 6.803 0 0 1-.281.158l-.02.012-.002.002c-2.115 1.123-4.957 1.205-7.812-.022a12.568 12.568 0 0 1-5.64-4.838c.649.48 1.35.902 2.097 1.252 3.019 1.414 6.051 1.311 8.197-.002C9.651 12.73 7.101 9.67 5.146 7.191a10.628 10.628 0 0 1-1.005-1.384c2.34 2.142 6.038 4.83 7.365 5.576C8.69 8.408 6.208 4.743 6.324 4.86c4.436 4.47 8.528 6.996 8.528 6.996.154.085.27.154.36.213.085-.215.16-.437.224-.668.708-2.588-.09-5.548-1.893-7.992z"/></svg>
<div style="position:absolute;left:25.077rem;top:0.875rem;height:0.36rem;line-height:0.36rem;font-family:'Liberation Sans', sans-serif;font-size:0.225rem;color:#262626;white-space:pre;letter-spacing:0.00245rem;">Supabase</div>
<div style="position:absolute;left:14.76rem;top:0.94rem;width:0.02rem;height:0.225rem;background:#dcdcdc;"></div>
<div style="position:absolute;left:17.32rem;top:0.94rem;width:0.02rem;height:0.225rem;background:#dcdcdc;"></div>
<div style="position:absolute;left:19.86rem;top:0.94rem;width:0.02rem;height:0.225rem;background:#dcdcdc;"></div>
<div style="position:absolute;left:22.04rem;top:0.94rem;width:0.02rem;height:0.225rem;background:#dcdcdc;"></div>
<div style="position:absolute;left:24.24rem;top:0.94rem;width:0.02rem;height:0.225rem;background:#dcdcdc;"></div>
<div style="position:absolute;left:26.5rem;top:0.94rem;width:0.02rem;height:0.225rem;background:#dcdcdc;"></div>
<svg style="position:absolute;left:28.59rem;top:0.91rem;" width="0.26rem" height="0.28rem" viewBox="0 0 26 28"><g fill="none" stroke="#7a7a7a" stroke-width="2.100" stroke-linecap="round" stroke-linejoin="round"><path d="M6.200 7.800h18M17.900 2.200 24.300 7.800 17.900 13.700"/><path d="M19.900 19.900H1.900M8 14.300 1.700 19.900l6.300 5.700"/></g></svg>
<svg style="position:absolute;left:29.06rem;top:0.918rem;" width="0.36rem" height="0.264rem" viewBox="0 0 36 26.400"><path d="M0 1.100h26M0 7h35.800M0 13.100h26M0 19.100h35.800M0 25.200h35.800" stroke="#7a7a7a" stroke-width="2.100"/></svg>
<div style="position:absolute;left:29.6rem;top:0.935rem;width:0.02rem;height:0.233rem;background:#dcdcdc;"></div>
<svg style="position:absolute;left:29.8rem;top:0.92rem;" width="0.26rem" height="0.258rem" viewBox="0 0 26 25.800"><rect x="1.200" y="1.200" width="23.500" height="23.300" rx="4.500" fill="none" stroke="#7a7a7a" stroke-width="2.300"/><path d="M9.100 1.500v22.800" stroke="#7a7a7a" stroke-width="2.100"/><path d="M12.200 12.900h9.400M16.900 8.200v9.400" stroke="#7a7a7a" stroke-width="2.100"/></svg>
<svg style="position:absolute;left:5.633rem;top:1.476rem;" width="0.248rem" height="0.248rem" viewBox="0 0 30 30"><rect x="0" y="0" width="30" height="30" rx="7" fill="#2f7cf8"/><rect x="2.900" y="2.900" width="24.200" height="24.200" rx="4.600" fill="#3b82f7" stroke="#b5d2fb" stroke-width="1.700"/><g stroke="#fff" stroke-width="1.850" stroke-linecap="round" fill="none" transform="translate(0.800,0.200)"><path d="M15.300 7.200L9.900 17.800"/><path d="M12.800 7.200l9.500 15.200"/><path d="M6.400 18.200h10.200"/><path d="M19.700 18.200h4.300"/><path d="M8.200 21.700l1.300-1.500"/></g></svg>
<div style="position:absolute;left:6.006rem;top:1.434rem;height:0.36rem;line-height:0.36rem;font-family:'Liberation Sans', sans-serif;font-size:0.225rem;color:#262626;white-space:pre;letter-spacing:0.00662rem;">TodoList</div>
<svg style="position:absolute;left:7.001rem;top:1.515rem;" width="0.075rem" height="0.197rem" viewBox="0 0 7.500 19.700"><path d="M1.300 1.200c3.300 4.500 4.700 6.600 4.700 8.650s-1.400 4.150-4.700 8.650" fill="none" stroke="#8a8a8a" stroke-width="2.300"/></svg>
<svg style="position:absolute;left:7.255rem;top:1.5rem;" width="0.248rem" height="0.199rem" viewBox="0 0 29 24"><path fill="#8d9195" d="M0 4.2C0 1.6 1.4 0 4 0h5.2c1.3 0 2 .3 3 1.2l1.2 1c.5.4.9.6 1.8.6H25c2.6 0 4 1.4 4 3.9V7.900H0z"/><path fill="#8d9195" d="M0 9.700h29v10.400c0 2.5-1.4 3.9-4 3.9H4c-2.6 0-4-1.4-4-3.9z"/></svg>
<div style="position:absolute;left:7.62rem;top:1.434rem;height:0.36rem;line-height:0.36rem;font-family:'Liberation Sans', sans-serif;font-size:0.225rem;color:#262626;white-space:pre;letter-spacing:0.00712rem;">TodoList</div>
<svg style="position:absolute;left:8.626rem;top:1.515rem;" width="0.075rem" height="0.197rem" viewBox="0 0 7.500 19.700"><path d="M1.300 1.200c3.300 4.500 4.700 6.600 4.700 8.650s-1.400 4.150-4.700 8.650" fill="none" stroke="#8a8a8a" stroke-width="2.300"/></svg>
<svg style="position:absolute;left:8.877rem;top:1.5rem;" width="0.248rem" height="0.199rem" viewBox="0 0 29 24"><path fill="#8d9195" d="M0 4.2C0 1.6 1.4 0 4 0h5.2c1.3 0 2 .3 3 1.2l1.2 1c.5.4.9.6 1.8.6H25c2.6 0 4 1.4 4 3.9V7.900H0z"/><path fill="#8d9195" d="M0 9.700h29v10.400c0 2.5-1.4 3.9-4 3.9H4c-2.6 0-4-1.4-4-3.9z"/></svg>
<div style="position:absolute;left:9.239rem;top:1.434rem;height:0.36rem;line-height:0.36rem;font-family:'Liberation Sans', sans-serif;font-size:0.225rem;color:#262626;white-space:pre;letter-spacing:0.00606rem;">ViewModel</div>
<svg style="position:absolute;left:10.501rem;top:1.515rem;" width="0.075rem" height="0.197rem" viewBox="0 0 7.500 19.700"><path d="M1.300 1.200c3.300 4.500 4.700 6.600 4.700 8.650s-1.400 4.150-4.700 8.650" fill="none" stroke="#8a8a8a" stroke-width="2.300"/></svg>
<svg style="position:absolute;left:10.755rem;top:1.495rem;overflow:visible;" preserveAspectRatio="none" width="0.25rem" height="0.22rem" viewBox="2.35 3.35 18.3 16.6"><path fill="#f0803f" d="M13.543 3.41c4.114 2.47 6.545 7.162 5.549 11.131-.024.093-.05.181-.076.272l.002.001c2.062 2.538 1.5 5.258 1.236 4.745-1.072-2.086-3.066-1.568-4.088-1.043a6.803 6.803 0 0 1-.281.158l-.02.012-.002.002c-2.115 1.123-4.957 1.205-7.812-.022a12.568 12.568 0 0 1-5.64-4.838c.649.48 1.35.902 2.097 1.252 3.019 1.414 6.051 1.311 8.197-.002C9.651 12.73 7.101 9.67 5.146 7.191a10.628 10.628 0 0 1-1.005-1.384c2.34 2.142 6.038 4.83 7.365 5.576C8.69 8.408 6.208 4.743 6.324 4.86c4.436 4.47 8.528 6.996 8.528 6.996.154.085.27.154.36.213.085-.215.16-.437.224-.668.708-2.588-.09-5.548-1.893-7.992z"/></svg>
<div style="position:absolute;left:11.125rem;top:1.434rem;height:0.36rem;line-height:0.36rem;font-family:'Liberation Sans', sans-serif;font-size:0.225rem;color:#262626;white-space:pre;letter-spacing:0.00644rem;">TodoListViewModel</div>
<svg style="position:absolute;left:13.286rem;top:1.515rem;" width="0.075rem" height="0.197rem" viewBox="0 0 7.500 19.700"><path d="M1.300 1.200c3.300 4.500 4.700 6.600 4.700 8.650s-1.400 4.150-4.700 8.650" fill="none" stroke="#8a8a8a" stroke-width="2.300"/></svg>
<div style="position:absolute;left:13.52rem;top:1.458rem;width:0.28rem;height:0.28rem;background:#3478f6;border-radius:0.06rem;"></div>
<div style="position:absolute;left:13.562rem;top:1.4183rem;height:0.37rem;line-height:0.37rem;font-family:'Liberation Sans', sans-serif;font-size:0.23rem;color:#ffffff;white-space:pre;font-weight:bold;">M</div>
<div style="position:absolute;left:13.892rem;top:1.434rem;height:0.36rem;line-height:0.36rem;font-family:'Liberation Sans', sans-serif;font-size:0.225rem;color:#262626;white-space:pre;letter-spacing:0.00749rem;">filterTodos(on:)</div>
<div style="position:absolute;left:5.46rem;top:3.96rem;width:24.78rem;height:0.44rem;background:#ecf3fe;"></div>
<div style="position:absolute;left:6.52rem;top:2.7rem;width:0.14rem;height:15.31rem;background:#e7e7e7;border-radius:0 0 0.07rem 0.07rem;"></div>
<div style="position:absolute;left:6.52rem;top:3.08rem;width:0.14rem;height:0.44rem;background:#a0a0a0;"></div>
<svg style="position:absolute;left:6.549rem;top:3.239rem;" width="0.08rem" height="0.122rem" viewBox="0 0 8 12.200"><path d="M1.700 1.700l4.500 4.400-4.500 4.400" fill="none" stroke="#f4f4f4" stroke-width="2.600" stroke-linecap="round" stroke-linejoin="round"/></svg>
<div style="position:absolute;left:6.52rem;top:3.975rem;width:0.14rem;height:13.16rem;background:#d3d3d3;border-radius:0.07rem;box-shadow:0 0 0 0.01rem rgba(255,255,255,.55);"></div>
<div style="position:absolute;left:6.52rem;top:3.975rem;width:0.14rem;height:0.425rem;background:#c4c9d3;border-radius:0.07rem 0.07rem 0 0;"></div>
<div style="position:absolute;left:6.52rem;top:4.855rem;width:0.14rem;height:11.41rem;background:#bfbfbf;border-radius:0.07rem;box-shadow:0 0 0 0.01rem rgba(255,255,255,.55);"></div>
<div style="position:absolute;left:6.52rem;top:6.18rem;width:0.14rem;height:1.275rem;background:#ababab;border-radius:0.07rem;box-shadow:0 0 0 0.01rem rgba(255,255,255,.55);"></div>
<div style="position:absolute;left:6.52rem;top:8.14rem;width:0.14rem;height:0.015rem;background:#eeeeee;"></div>
<div style="position:absolute;left:6.52rem;top:9.255rem;width:0.14rem;height:6.12rem;background:#ababab;border-radius:0.07rem;box-shadow:0 0 0 0.01rem rgba(255,255,255,.55);"></div>
<div style="position:absolute;left:6.52rem;top:14.3rem;width:0.14rem;height:0.015rem;background:#eeeeee;"></div>
<div style="position:absolute;left:5.6rem;top:3.965rem;width:0.1rem;height:13.62rem;background:#a9c7fb;border-radius:0.05rem;box-sizing:border-box;border:0.02rem solid #3478f6;"></div>
<div style="position:absolute;right:23.823rem;top:2.6318rem;height:0.47rem;line-height:0.47rem;font-family:'Liberation Sans', sans-serif;font-size:0.295rem;color:#a8a8a8;white-space:pre;letter-spacing:-0.009rem;margin-right:-0.009rem;">106</div>
<div style="position:absolute;right:23.823rem;top:3.0718rem;height:0.47rem;line-height:0.47rem;font-family:'Liberation Sans', sans-serif;font-size:0.295rem;color:#a8a8a8;white-space:pre;letter-spacing:-0.009rem;margin-right:-0.009rem;">107</div>
<div class="c" style="left:7.6882rem;top:3.1094rem;height:0.44rem;line-height:0.44rem;font-size:0.34rem;letter-spacing:-0.00623rem;color:#262626;"><span class="k">func</span> <span class="fd">update</span><span class="b">(</span><span class="fd">todo</span> updatedTodo: <span class="pt">TodoItem</span><span class="b">)</span> <span class="b">{</span></div>
<div style="position:absolute;right:23.823rem;top:3.5118rem;height:0.47rem;line-height:0.47rem;font-family:'Liberation Sans', sans-serif;font-size:0.295rem;color:#a8a8a8;white-space:pre;letter-spacing:-0.009rem;margin-right:-0.009rem;">128</div>
<div style="position:absolute;right:23.823rem;top:3.9518rem;height:0.47rem;line-height:0.47rem;font-family:'Liberation Sans', sans-serif;font-size:0.295rem;color:#1f1f1f;white-space:pre;letter-spacing:-0.009rem;margin-right:-0.009rem;">129</div>
<div class="c" style="left:7.6882rem;top:3.9894rem;height:0.44rem;line-height:0.44rem;font-size:0.34rem;letter-spacing:-0.00623rem;color:#262626;"><span class="k">func</span> <span class="fd">filterTodos</span><span class="b">(</span><span class="fd">on</span> searchTerm: <span class="st">String</span><span class="b">)</span> <span class="k">async</span> <span class="k">throws</span> <span class="b">{</span></div>
<div style="position:absolute;right:23.823rem;top:4.3918rem;height:0.47rem;line-height:0.47rem;font-family:'Liberation Sans', sans-serif;font-size:0.295rem;color:#a8a8a8;white-space:pre;letter-spacing:-0.009rem;margin-right:-0.009rem;">130</div>
<div style="position:absolute;right:23.831rem;top:4.8318rem;height:0.47rem;line-height:0.47rem;font-family:'Liberation Sans', sans-serif;font-size:0.295rem;color:#a8a8a8;white-space:pre;letter-spacing:-0.009rem;margin-right:-0.009rem;">131</div>
<div class="c" style="left:8.4794rem;top:4.8694rem;height:0.44rem;line-height:0.44rem;font-size:0.34rem;letter-spacing:-0.00623rem;color:#262626;"><span class="k">if</span> searchTerm.<span class="sf">isEmpty</span> <span class="b">{</span></div>
<div style="position:absolute;right:23.823rem;top:5.2718rem;height:0.47rem;line-height:0.47rem;font-family:'Liberation Sans', sans-serif;font-size:0.295rem;color:#a8a8a8;white-space:pre;letter-spacing:-0.009rem;margin-right:-0.009rem;">132</div>
<div style="position:absolute;right:23.823rem;top:5.7118rem;height:0.47rem;line-height:0.47rem;font-family:'Liberation Sans', sans-serif;font-size:0.295rem;color:#a8a8a8;white-space:pre;letter-spacing:-0.009rem;margin-right:-0.009rem;">133</div>
<div class="c" style="left:9.2706rem;top:5.7494rem;height:0.44rem;line-height:0.44rem;font-size:0.34rem;letter-spacing:-0.00623rem;color:#262626;"><span class="cm">// Get all the to–dos</span></div>
<div style="position:absolute;right:23.823rem;top:6.1518rem;height:0.47rem;line-height:0.47rem;font-family:'Liberation Sans', sans-serif;font-size:0.295rem;color:#a8a8a8;white-space:pre;letter-spacing:-0.009rem;margin-right:-0.009rem;">134</div>
<div class="c" style="left:9.2706rem;top:6.1894rem;height:0.44rem;line-height:0.44rem;font-size:0.34rem;letter-spacing:-0.00623rem;color:#262626;"><span class="st">Task</span> <span class="b">{</span></div>
<div style="position:absolute;right:23.823rem;top:6.5918rem;height:0.47rem;line-height:0.47rem;font-family:'Liberation Sans', sans-serif;font-size:0.295rem;color:#a8a8a8;white-space:pre;letter-spacing:-0.009rem;margin-right:-0.009rem;">135</div>
<div class="c" style="left:10.0618rem;top:6.6294rem;height:0.44rem;line-height:0.44rem;font-size:0.34rem;letter-spacing:-0.00623rem;color:#262626;"><span class="k">try</span> <span class="k">await</span> <span class="pf">getTodos</span><span class="b">(</span><span class="b">)</span></div>
<div style="position:absolute;right:23.823rem;top:7.0318rem;height:0.47rem;line-height:0.47rem;font-family:'Liberation Sans', sans-serif;font-size:0.295rem;color:#a8a8a8;white-space:pre;letter-spacing:-0.009rem;margin-right:-0.009rem;">136</div>
<div class="c" style="left:9.2706rem;top:7.0694rem;height:0.44rem;line-height:0.44rem;font-size:0.34rem;letter-spacing:-0.00623rem;color:#262626;"><span class="b">}</span></div>
<div style="position:absolute;right:23.823rem;top:7.4718rem;height:0.47rem;line-height:0.47rem;font-family:'Liberation Sans', sans-serif;font-size:0.295rem;color:#a8a8a8;white-space:pre;letter-spacing:-0.009rem;margin-right:-0.009rem;">137</div>
<div style="position:absolute;right:23.823rem;top:7.9118rem;height:0.47rem;line-height:0.47rem;font-family:'Liberation Sans', sans-serif;font-size:0.295rem;color:#a8a8a8;white-space:pre;letter-spacing:-0.009rem;margin-right:-0.009rem;">138</div>
<div class="c" style="left:8.4794rem;top:7.9494rem;height:0.44rem;line-height:0.44rem;font-size:0.34rem;letter-spacing:-0.00623rem;color:#262626;"><span class="b">}</span> <span class="k">else</span> <span class="b">{</span></div>
<div style="position:absolute;right:23.823rem;top:8.3518rem;height:0.47rem;line-height:0.47rem;font-family:'Liberation Sans', sans-serif;font-size:0.295rem;color:#a8a8a8;white-space:pre;letter-spacing:-0.009rem;margin-right:-0.009rem;">139</div>
<div style="position:absolute;right:23.823rem;top:8.7918rem;height:0.47rem;line-height:0.47rem;font-family:'Liberation Sans', sans-serif;font-size:0.295rem;color:#a8a8a8;white-space:pre;letter-spacing:-0.009rem;margin-right:-0.009rem;">140</div>
<div class="c" style="left:9.2706rem;top:8.8294rem;height:0.44rem;line-height:0.44rem;font-size:0.34rem;letter-spacing:-0.00623rem;color:#262626;"><span class="cm">// Get a filtered list of to–dos</span></div>
<div style="position:absolute;right:23.831rem;top:9.2318rem;height:0.47rem;line-height:0.47rem;font-family:'Liberation Sans', sans-serif;font-size:0.295rem;color:#a8a8a8;white-space:pre;letter-spacing:-0.009rem;margin-right:-0.009rem;">141</div>
<div class="c" style="left:9.2706rem;top:9.2694rem;height:0.44rem;line-height:0.44rem;font-size:0.34rem;letter-spacing:-0.00623rem;color:#262626;"><span class="k">do</span> <span class="b">{</span></div>
<div style="position:absolute;right:23.823rem;top:9.6718rem;height:0.47rem;line-height:0.47rem;font-family:'Liberation Sans', sans-serif;font-size:0.295rem;color:#a8a8a8;white-space:pre;letter-spacing:-0.009rem;margin-right:-0.009rem;">142</div>
<div class="c" style="left:10.0618rem;top:9.7094rem;height:0.44rem;line-height:0.44rem;font-size:0.34rem;letter-spacing:-0.00623rem;color:#262626;"><span class="k">let</span> results: <span class="b">[</span><span class="pt">TodoItem</span><span class="b">]</span> = <span class="k">try</span> <span class="k">await</span> <span class="pf">supabase</span></div>
<div style="position:absolute;right:23.823rem;top:10.1118rem;height:0.47rem;line-height:0.47rem;font-family:'Liberation Sans', sans-serif;font-size:0.295rem;color:#a8a8a8;white-space:pre;letter-spacing:-0.009rem;margin-right:-0.009rem;">143</div>
<div class="c" style="left:10.853rem;top:10.1494rem;height:0.44rem;line-height:0.44rem;font-size:0.34rem;letter-spacing:-0.00623rem;color:#262626;">.from<span class="b">(</span><span class="s">"todos"</span><span class="b">)</span></div>
<div style="position:absolute;right:23.823rem;top:10.5518rem;height:0.47rem;line-height:0.47rem;font-family:'Liberation Sans', sans-serif;font-size:0.295rem;color:#a8a8a8;white-space:pre;letter-spacing:-0.009rem;margin-right:-0.009rem;">144</div>
<div class="c" style="left:10.853rem;top:10.5894rem;height:0.44rem;line-height:0.44rem;font-size:0.34rem;letter-spacing:-0.00623rem;color:#262626;">.<span class="sf">select</span><span class="b">(</span><span class="b">)</span></div>
<div style="position:absolute;right:23.823rem;top:10.9918rem;height:0.47rem;line-height:0.47rem;font-family:'Liberation Sans', sans-serif;font-size:0.295rem;color:#a8a8a8;white-space:pre;letter-spacing:-0.009rem;margin-right:-0.009rem;">145</div>
<div class="c" style="left:10.853rem;top:11.0294rem;height:0.44rem;line-height:0.44rem;font-size:0.34rem;letter-spacing:-0.00623rem;color:#262626;">.ilike<span class="b">(</span><span class="s">"title"</span>, pattern: <span class="s">"%</span>\<span class="b">(</span>searchTerm<span class="b">)</span><span class="s">%"</span><span class="b">)</span></div>
<div style="position:absolute;right:23.823rem;top:11.4318rem;height:0.47rem;line-height:0.47rem;font-family:'Liberation Sans', sans-serif;font-size:0.295rem;color:#a8a8a8;white-space:pre;letter-spacing:-0.009rem;margin-right:-0.009rem;">146</div>
<div class="c" style="left:10.853rem;top:11.4694rem;height:0.44rem;line-height:0.44rem;font-size:0.34rem;letter-spacing:-0.00623rem;color:#262626;">.order<span class="b">(</span><span class="s">"id"</span>, ascending: <span class="k">true</span><span class="b">)</span></div>
<div style="position:absolute;right:23.823rem;top:11.8718rem;height:0.47rem;line-height:0.47rem;font-family:'Liberation Sans', sans-serif;font-size:0.295rem;color:#a8a8a8;white-space:pre;letter-spacing:-0.009rem;margin-right:-0.009rem;">147</div>
<div class="c" style="left:10.853rem;top:11.9094rem;height:0.44rem;line-height:0.44rem;font-size:0.34rem;letter-spacing:-0.00623rem;color:#262626;">.execute<span class="b">(</span><span class="b">)</span></div>
<div style="position:absolute;right:23.823rem;top:12.3118rem;height:0.47rem;line-height:0.47rem;font-family:'Liberation Sans', sans-serif;font-size:0.295rem;color:#a8a8a8;white-space:pre;letter-spacing:-0.009rem;margin-right:-0.009rem;">148</div>
<div class="c" style="left:10.853rem;top:12.3494rem;height:0.44rem;line-height:0.44rem;font-size:0.34rem;letter-spacing:-0.00623rem;color:#262626;">.<span class="sf">value</span></div>
<div style="position:absolute;right:23.823rem;top:12.7518rem;height:0.47rem;line-height:0.47rem;font-family:'Liberation Sans', sans-serif;font-size:0.295rem;color:#a8a8a8;white-space:pre;letter-spacing:-0.009rem;margin-right:-0.009rem;">149</div>
<div style="position:absolute;right:23.823rem;top:13.1918rem;height:0.47rem;line-height:0.47rem;font-family:'Liberation Sans', sans-serif;font-size:0.295rem;color:#a8a8a8;white-space:pre;letter-spacing:-0.009rem;margin-right:-0.009rem;">150</div>
<div class="c" style="left:10.0618rem;top:13.2294rem;height:0.44rem;line-height:0.44rem;font-size:0.34rem;letter-spacing:-0.00623rem;color:#262626;"><span class="k">self</span>.<span class="pf">todos</span> = results</div>
<div style="position:absolute;right:23.831rem;top:13.6318rem;height:0.47rem;line-height:0.47rem;font-family:'Liberation Sans', sans-serif;font-size:0.295rem;color:#a8a8a8;white-space:pre;letter-spacing:-0.009rem;margin-right:-0.009rem;">151</div>
<div style="position:absolute;right:23.823rem;top:14.0718rem;height:0.47rem;line-height:0.47rem;font-family:'Liberation Sans', sans-serif;font-size:0.295rem;color:#a8a8a8;white-space:pre;letter-spacing:-0.009rem;margin-right:-0.009rem;">152</div>
<div class="c" style="left:9.2706rem;top:14.1094rem;height:0.44rem;line-height:0.44rem;font-size:0.34rem;letter-spacing:-0.00623rem;color:#262626;"><span class="b">}</span> <span class="k">catch</span> <span class="b">{</span></div>
<div style="position:absolute;right:23.823rem;top:14.5118rem;height:0.47rem;line-height:0.47rem;font-family:'Liberation Sans', sans-serif;font-size:0.295rem;color:#a8a8a8;white-space:pre;letter-spacing:-0.009rem;margin-right:-0.009rem;">153</div>
<div class="c" style="left:10.0618rem;top:14.5494rem;height:0.44rem;line-height:0.44rem;font-size:0.34rem;letter-spacing:-0.00623rem;color:#262626;"><span class="sf">debugPrint</span><span class="b">(</span>error<span class="b">)</span></div>
<div style="position:absolute;right:23.823rem;top:14.9518rem;height:0.47rem;line-height:0.47rem;font-family:'Liberation Sans', sans-serif;font-size:0.295rem;color:#a8a8a8;white-space:pre;letter-spacing:-0.009rem;margin-right:-0.009rem;">154</div>
<div class="c" style="left:9.2706rem;top:14.9894rem;height:0.44rem;line-height:0.44rem;font-size:0.34rem;letter-spacing:-0.00623rem;color:#262626;"><span class="b">}</span></div>
<div style="position:absolute;right:23.823rem;top:15.3918rem;height:0.47rem;line-height:0.47rem;font-family:'Liberation Sans', sans-serif;font-size:0.295rem;color:#a8a8a8;white-space:pre;letter-spacing:-0.009rem;margin-right:-0.009rem;">155</div>
<div style="position:absolute;right:23.823rem;top:15.8318rem;height:0.47rem;line-height:0.47rem;font-family:'Liberation Sans', sans-serif;font-size:0.295rem;color:#a8a8a8;white-space:pre;letter-spacing:-0.009rem;margin-right:-0.009rem;">156</div>
<div class="c" style="left:8.4794rem;top:15.8694rem;height:0.44rem;line-height:0.44rem;font-size:0.34rem;letter-spacing:-0.00623rem;color:#262626;"><span class="b">}</span></div>
<div style="position:absolute;right:23.823rem;top:16.2718rem;height:0.47rem;line-height:0.47rem;font-family:'Liberation Sans', sans-serif;font-size:0.295rem;color:#a8a8a8;white-space:pre;letter-spacing:-0.009rem;margin-right:-0.009rem;">157</div>
<div style="position:absolute;right:23.823rem;top:16.7118rem;height:0.47rem;line-height:0.47rem;font-family:'Liberation Sans', sans-serif;font-size:0.295rem;color:#a8a8a8;white-space:pre;letter-spacing:-0.009rem;margin-right:-0.009rem;">158</div>
<div class="c" style="left:7.6882rem;top:16.7494rem;height:0.44rem;line-height:0.44rem;font-size:0.34rem;letter-spacing:-0.00623rem;color:#262626;"><span class="b">}</span></div>
<div style="position:absolute;right:23.823rem;top:17.1518rem;height:0.47rem;line-height:0.47rem;font-family:'Liberation Sans', sans-serif;font-size:0.295rem;color:#a8a8a8;white-space:pre;letter-spacing:-0.009rem;margin-right:-0.009rem;">159</div>
<div style="position:absolute;right:23.823rem;top:17.5918rem;height:0.47rem;line-height:0.47rem;font-family:'Liberation Sans', sans-serif;font-size:0.295rem;color:#a8a8a8;white-space:pre;letter-spacing:-0.009rem;margin-right:-0.009rem;">160</div>
<div class="c" style="left:6.897rem;top:17.6294rem;height:0.44rem;line-height:0.44rem;font-size:0.34rem;letter-spacing:-0.00623rem;color:#262626;"><span class="b">}</span></div>
<div style="position:absolute;right:23.831rem;top:18.0318rem;height:0.47rem;line-height:0.47rem;font-family:'Liberation Sans', sans-serif;font-size:0.295rem;color:#a8a8a8;white-space:pre;letter-spacing:-0.009rem;margin-right:-0.009rem;">161</div>
<div style="position:absolute;left:15.84rem;top:3.1rem;width:0.62rem;height:0.4rem;background:#d9d9d9;border-radius:0.085rem;"></div>
<div style="position:absolute;left:15.931rem;top:3.249rem;width:0.102rem;height:0.102rem;border-radius:50%;background:#747474;"></div>
<div style="position:absolute;left:16.099rem;top:3.249rem;width:0.102rem;height:0.102rem;border-radius:50%;background:#747474;"></div>
<div style="position:absolute;left:16.268rem;top:3.249rem;width:0.102rem;height:0.102rem;border-radius:50%;background:#747474;"></div>
<div class="c" style="left:16.483rem;top:3.1094rem;height:0.44rem;line-height:0.44rem;font-size:0.34rem;letter-spacing:-0.00623rem;color:#262626;"><span class="b">}</span></div>
<svg style="position:absolute;left:7.0065rem;top:4.0055rem;" width="0.555rem" height="0.555rem" viewBox="0 0 55.5 55.5"><circle cx="27.75" cy="27.75" r="24.95" fill="none" stroke="#ec6f52" stroke-width="1.800"/><circle cx="27.75" cy="27.75" r="22.15" fill="none" stroke="#ec6f52" stroke-width="1.800"/></svg>
<svg style="position:absolute;left:7.188rem;top:4.123rem;" width="0.124rem" height="0.322rem" viewBox="0 0 12.400 32.200"><path d="M8.500 0h3.900v32.200H8.400V5.300L0 10.300V6.200z" fill="#e8411d"/></svg>
<svg style="position:absolute;left:7.718rem;top:5.275rem;" width="0.55rem" height="0.55rem" viewBox="0 0 55 55"><circle cx="27.5" cy="27.5" r="24.7" fill="none" stroke="#ec6f52" stroke-width="1.800"/><circle cx="27.5" cy="27.5" r="21.9" fill="none" stroke="#ec6f52" stroke-width="1.800"/></svg>
<div style="position:absolute;left:7.693rem;top:5.25rem;width:0.6rem;height:0.6rem;line-height:0.6rem;text-align:center;font-size:0.46rem;color:#e8411d;font-family:'Liberation Sans', sans-serif;">2</div>
<svg style="position:absolute;left:8.299rem;top:9.477rem;" width="0.558rem" height="0.558rem" viewBox="0 0 55.8 55.8"><circle cx="27.9" cy="27.9" r="25.099999999999998" fill="none" stroke="#ec6f52" stroke-width="1.800"/><circle cx="27.9" cy="27.9" r="22.299999999999997" fill="none" stroke="#ec6f52" stroke-width="1.800"/></svg>
<div style="position:absolute;left:8.278rem;top:9.456rem;width:0.6rem;height:0.6rem;line-height:0.6rem;text-align:center;font-size:0.46rem;color:#e8411d;font-family:'Liberation Sans', sans-serif;">3</div>
<div style="position:absolute;left:5.46rem;top:1.9rem;width:24.78rem;height:0.42rem;background:#f2f2f2;"></div>
<div style="position:absolute;left:5.46rem;top:2.32rem;width:24.78rem;height:0.02rem;background:#d9d9d9;"></div>
<div style="position:absolute;left:5.46rem;top:2.34rem;width:24.78rem;height:0.42rem;background:#f2f2f2;"></div>
<div style="position:absolute;left:5.46rem;top:2.76rem;width:24.78rem;height:0.02rem;background:#d8d8d8;"></div>
<div style="position:absolute;left:5.46rem;top:2.78rem;width:24.78rem;height:0.22rem;background:linear-gradient(to bottom,rgba(0,0,0,.065),rgba(0,0,0,.03) 35%,rgba(0,0,0,.008) 75%,rgba(0,0,0,0));"></div>
<div style="position:absolute;right:23.841rem;top:1.8768rem;height:0.47rem;line-height:0.47rem;font-family:'Liberation Sans', sans-serif;font-size:0.295rem;color:#a8a8a8;white-space:pre;letter-spacing:-0.009rem;margin-right:-0.009rem;">11</div>
<div style="position:absolute;right:23.841rem;top:2.3258rem;height:0.47rem;line-height:0.47rem;font-family:'Liberation Sans', sans-serif;font-size:0.295rem;color:#a8a8a8;white-space:pre;letter-spacing:-0.009rem;margin-right:-0.009rem;">81</div>
<div class="c" style="left:6.897rem;top:1.9244rem;height:0.44rem;line-height:0.44rem;font-size:0.34rem;letter-spacing:-0.00623rem;color:#262626;"><span class="k">class</span> <span class="td">TodoListViewModel</span> <span class="b">{</span></div>
<div class="c" style="left:7.6882rem;top:2.3644rem;height:0.44rem;line-height:0.44rem;font-size:0.34rem;letter-spacing:-0.00623rem;color:#262626;"><span class="k">func</span> <span class="fd">delete</span><span class="b">(</span><span class="fd">_</span> todo: <span class="pt">TodoItem</span><span class="b">)</span> <span class="b">{</span></div>
<div style="position:absolute;left:5.46rem;top:18.34rem;width:24.78rem;height:0.54rem;background:#ffffff;"></div>
<div style="position:absolute;left:5.46rem;top:18.32rem;width:24.78rem;height:0.02rem;background:#dedede;"></div>
<svg style="position:absolute;left:5.69rem;top:18.52rem;" width="0.3rem" height="0.18rem" viewBox="0 0 30 18"><path d="M0 3.500C0 1.200 1.200 0 3.500 0h17.700c1.400 0 2.200.400 3.100 1.400l4.900 5.800c.9 1.100.9 2.500 0 3.600l-4.900 5.800c-.9 1-1.700 1.400-3.100 1.400H3.500C1.200 18 0 16.800 0 14.500z" fill="#3478f6"/></svg>
<div style="position:absolute;left:6.14rem;top:18.49rem;width:0.02rem;height:0.24rem;background:#dcdcdc;"></div>
<svg style="position:absolute;left:6.365rem;top:18.485rem;" width="0.19rem" height="0.25rem" viewBox="0 0 19 25"><rect x="1" y="1" width="5" height="23" rx="1.200" fill="none" stroke="#6e6e6e" stroke-width="2"/><rect x="13" y="1" width="5" height="23" rx="1.200" fill="none" stroke="#6e6e6e" stroke-width="2"/></svg>
<svg style="position:absolute;left:6.93rem;top:18.49rem;" width="0.27rem" height="0.26rem" viewBox="0 0 27 26"><g fill="none" stroke="#b9b9b9" stroke-width="2" stroke-linejoin="miter"><path d="M0.800 16.400 13 3.900 25.300 15.700"/><path d="M25.500 8.200v7.700h-7.800"/><rect x="4.500" y="19.700" width="16.600" height="4.300"/></g></svg>
<svg style="position:absolute;left:7.56rem;top:18.49rem;overflow:visible;" width="0.2rem" height="0.26rem" viewBox="0 0 20 26"><g fill="none" stroke="#b9b9b9" stroke-width="2" stroke-linejoin="miter"><path d="M10 -0.900v16.800M3.400 9.600l6.600 6.600 6.600-6.600"/><rect x="1.700" y="19.700" width="16.600" height="4.300"/></g></svg>
<svg style="position:absolute;left:8.16rem;top:18.49rem;overflow:visible;" width="0.2rem" height="0.26rem" viewBox="0 0 20 26"><g fill="none" stroke="#b9b9b9" stroke-width="2" stroke-linejoin="miter"><path d="M9.900 16.400V0.300M3.200 6.600l6.700-6.600 6.700 6.600"/><rect x="1.600" y="19.700" width="16.600" height="4.300"/></g></svg>
<div style="position:absolute;left:8.56rem;top:18.49rem;width:0.02rem;height:0.24rem;background:#dcdcdc;"></div>
<svg style="position:absolute;left:8.76rem;top:18.48rem;" width="0.24rem" height="0.27rem" viewBox="0 0 24 27"><g fill="none" stroke="#6e6e6e" stroke-width="2" stroke-linejoin="round" stroke-linecap="round"><path d="M10.200 12.200 22 6.400v14.100L10.200 26.200z"/><path d="M5.900 22.700V9.600L18 3.600"/><path d="M1.800 20.700V7.300L14 1.200"/></g></svg>
<svg style="position:absolute;left:9.34rem;top:18.48rem;" width="0.27rem" height="0.25rem" viewBox="0 0 27 25"><g fill="none" stroke="#6e6e6e" stroke-width="2"><circle cx="5.600" cy="4.300" r="3.500"/><circle cx="21.600" cy="12.400" r="3.500"/><circle cx="5.600" cy="20.700" r="3.500"/><path d="M8.800 5.900 18.400 10.800M8.800 19.100 18.400 14"/></g></svg>
<svg style="position:absolute;left:9.957rem;top:18.478rem;" width="0.23rem" height="0.255rem" viewBox="0 0 23 25.500"><g fill="none" stroke="#6e6e6e" stroke-width="2"><rect x="1" y="1" width="21" height="9.600" rx="4.800"/><rect x="1" y="14.700" width="21" height="9.600" rx="4.800"/></g><circle cx="6.500" cy="5.800" r="2.800" fill="#6e6e6e"/><circle cx="16.500" cy="19.500" r="2.800" fill="#6e6e6e"/></svg>
<svg style="position:absolute;left:10.55rem;top:18.48rem;" width="0.27rem" height="0.26rem" viewBox="0 0 27 26"><path d="M25.500 0.900 1.600 10.800l11.400 2.100 2.300 11.600z" fill="none" stroke="#6e6e6e" stroke-width="2.100" stroke-linejoin="round"/></svg>
<div style="position:absolute;left:10.98rem;top:18.49rem;width:0.02rem;height:0.24rem;background:#dcdcdc;"></div>
<svg style="position:absolute;left:11.18rem;top:18.49rem;" width="0.23rem" height="0.23rem" viewBox="0 0 30 30"><rect x="0" y="0" width="30" height="30" rx="7" fill="#6e6e6e"/><g stroke="#fff" stroke-width="1.850" stroke-linecap="round" fill="none" transform="translate(0.800,0.200)"><path d="M15.300 7.200L9.900 17.800"/><path d="M12.800 7.200l9.500 15.200"/><path d="M6.400 18.200h10.200"/><path d="M19.700 18.200h4.300"/><path d="M8.200 21.700l1.300-1.500"/></g></svg>
<div style="position:absolute;left:11.54rem;top:18.432rem;height:0.36rem;line-height:0.36rem;font-family:'Liberation Sans', sans-serif;font-size:0.225rem;color:#262626;white-space:pre;letter-spacing:0.00774rem;">TodoList</div>
<div style="position:absolute;left:27.6rem;top:18.428rem;height:0.36rem;line-height:0.36rem;font-family:'Liberation Sans', sans-serif;font-size:0.225rem;color:#808080;white-space:pre;letter-spacing:0.00913rem;-webkit-text-stroke:0.0045rem #808080;">Line: 129</div>
<div style="position:absolute;left:28.733rem;top:18.428rem;height:0.36rem;line-height:0.36rem;font-family:'Liberation Sans', sans-serif;font-size:0.225rem;color:#808080;white-space:pre;letter-spacing:0.00704rem;-webkit-text-stroke:0.0045rem #808080;">Col: 5</div>
<div style="position:absolute;left:29.54rem;top:18.5rem;width:0.02rem;height:0.23rem;background:#dcdcdc;"></div>
<svg style="position:absolute;left:29.73rem;top:18.48rem;" width="0.26rem" height="0.258rem" viewBox="0 0 26 25.800"><rect x="1.150" y="1.150" width="23.700" height="23.500" rx="4.500" fill="none" stroke="#7e7e7e" stroke-width="2.300"/><rect x="4.100" y="16.100" width="17.800" height="5.700" rx="1.800" fill="#7e7e7e"/></svg>
</div></body></html>
